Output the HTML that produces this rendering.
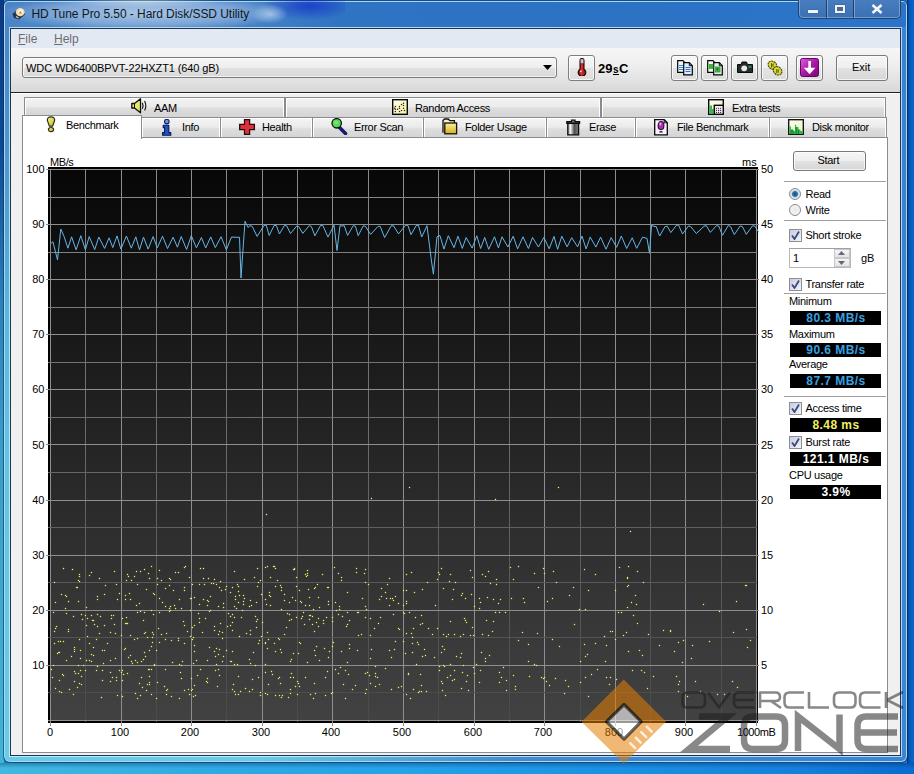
<!DOCTYPE html><html><head><meta charset="utf-8"><style>
*{margin:0;padding:0;box-sizing:border-box}
html,body{width:914px;height:774px;overflow:hidden;background:#1a7fc8}
body{position:relative;font-family:"Liberation Sans",sans-serif;font-size:11px;color:#000}
.a{position:absolute}
.t{position:absolute;white-space:nowrap;line-height:1}
.tab{position:absolute;background:linear-gradient(#f4f4f4,#ebebeb 45%,#dddddd 55%,#d4d4d4);border:1px solid #8a8b8e;border-bottom:none;box-shadow:inset 1px 1px 0 #fff,inset -1px 0 0 #fff}
.btn{position:absolute;border:1px solid #7a7a7a;border-radius:3px;background:linear-gradient(#f6f6f6,#eeeeee 50%,#e2e2e2 51%,#d6d6d6);box-shadow:inset 0 0 0 1px rgba(255,255,255,.7)}
.tb{position:absolute;border:1px solid #7e7e7e;border-radius:3px;background:linear-gradient(#f8f8f8,#eeeeee 50%,#e4e4e4 51%,#dcdcdc);box-shadow:inset 0 0 0 1px rgba(255,255,255,.75)}
.sep{position:absolute;height:1px;background:#a0a0a0;border-bottom:1px solid #fff}
.box{position:absolute;background:#000;color:#fff;font-weight:bold;font-size:12px;text-align:center;line-height:14px;letter-spacing:0.45px;padding-left:1px}
.lbl{position:absolute;white-space:nowrap;font-size:11px;line-height:1}
.yl{position:absolute;font-size:11px;line-height:1;text-align:right;width:30px}
.cb{position:absolute;width:13px;height:13px;border:1px solid #8f8f8f;background:linear-gradient(135deg,#c8cce0,#f4f4fa)}
</style></head><body>
<div class="a" style="left:0;top:0;width:914px;height:774px;background:#1a78c8"></div>
<div class="a" style="left:0;top:0;width:4px;height:774px;background:linear-gradient(#0a3a84 0,#0e4a94 150px,#2a80b8 300px,#3a9cc8 450px,#40b4d8 774px)"></div>
<div class="a" style="left:907px;top:0;width:7px;height:774px;background:linear-gradient(90deg,#002e80,#0456b0 2px,#0868d2 7px)"></div>
<div class="a" style="left:0;top:763px;width:914px;height:11px;background:linear-gradient(90deg,#40b8e0,#30aae4 200px,#24a2ea 400px,#1a92e4 600px,#1480dc 800px,#0a6ad0 914px)"></div>
<div class="a" style="left:0;top:763px;width:914px;height:11px;background:linear-gradient(rgba(0,40,90,.35),rgba(255,255,255,0) 5px)"></div>
<div class="a" style="left:3px;top:0px;width:905px;height:763px;border-radius:6px 6px 7px 7px;background:rgba(16,40,80,.55)"></div>
<div class="a" style="left:4px;top:1px;width:903px;height:761px;border-radius:5px 5px 6px 6px;background:#a8d8f4"></div>
<div class="a" style="left:5px;top:2px;width:901px;height:759px;border-radius:4px 4px 5px 5px;background:linear-gradient(180deg,#4a82c6 0,#4a8ac8 60px,#4e9cd0 180px,#58b8e0 320px,#60c4e4 450px,#68cce8 759px)"></div>
<div class="a" style="left:5px;top:2px;width:901px;height:759px;border-radius:4px 4px 5px 5px;background:linear-gradient(90deg,rgba(58,118,192,0) 0,rgba(58,118,192,0) 250px,rgba(58,120,196,.8) 520px,rgba(56,130,212,.96) 800px)"></div>
<div class="a" style="left:5px;top:2px;width:901px;height:25px;border-radius:4px 4px 0 0;background:linear-gradient(90deg,rgba(40,110,195,0) 0,rgba(40,110,195,0) 230px,rgba(40,112,195,.75) 330px,rgba(40,112,195,.8) 900px)"></div>
<div class="a" style="left:5px;top:1px;width:280px;height:26px;background:radial-gradient(ellipse 52% 70% at 50% 45%,rgba(210,226,244,.7),rgba(185,208,236,.45) 65%,rgba(150,190,230,0) 100%)"></div>
<div class="a" style="left:255px;top:0px;width:90px;height:24px;background:radial-gradient(ellipse 50% 60% at 60% 25%,rgba(10,30,200,.6),rgba(30,60,200,0) 100%)"></div>
<div class="a" style="left:252px;top:4px;width:36px;height:20px;background:radial-gradient(ellipse 50% 50% at 50% 50%,rgba(220,235,250,.55),rgba(200,220,240,0) 100%)"></div>
<div class="a" style="left:60px;top:0px;width:160px;height:10px;background:radial-gradient(ellipse 50% 60% at 50% 20%,rgba(230,240,230,.45),rgba(200,220,230,0) 100%)"></div>
<div class="t" style="left:31.5px;top:8px;font-size:12px;color:#101820;letter-spacing:-0.06px">HD Tune Pro 5.50 - Hard Disk/SSD Utility</div>
<svg style="position:absolute;left:11px;top:6px" width="16" height="14" viewBox="0 0 16 14" ><path d="M1.5 8L7 2.5L12 4L14 8.5L8 13.5L3 12Z" fill="#1a2440" opacity=".85"/><ellipse cx="9.2" cy="6.2" rx="4.4" ry="4.1" fill="#f0dcb0"/><ellipse cx="9.6" cy="5.6" rx="2.6" ry="2.2" fill="#fff4dc"/><circle cx="9.4" cy="6.6" r="1.1" fill="#b07840"/><path d="M5 10.5L7.5 12" stroke="#e8d0a0" stroke-width="1.2"/></svg>
<div class="a" style="left:798px;top:-4px;width:103px;height:23px;border-radius:0 0 5px 5px;border:1px solid rgba(30,50,90,.8);box-shadow:inset 0 0 0 1px rgba(180,210,240,.45);background:linear-gradient(#4a80c0,#3a70b4)"></div>
<div class="a" style="left:826px;top:0;width:1px;height:18px;background:rgba(30,50,90,.8)"></div>
<div class="a" style="left:827px;top:0;width:1px;height:18px;background:rgba(180,210,240,.45)"></div>
<div class="a" style="left:853px;top:0;width:1px;height:18px;background:rgba(30,50,90,.8)"></div>
<div class="a" style="left:854px;top:0;width:1px;height:18px;background:rgba(180,210,240,.45)"></div>
<div class="a" style="left:808px;top:10px;width:10px;height:3px;background:#f0f4f8;box-shadow:0 0 1px #203050"></div>
<div class="a" style="left:835px;top:5px;width:10px;height:8px;border:2px solid #f0f4f8;border-top-width:2px;background:#4a6a90;box-shadow:0 0 1px #203050"></div>
<svg style="position:absolute;left:871px;top:4px" width="12" height="10" viewBox="0 0 12 10" ><path d="M1.5 1 L10.5 9 M10.5 1 L1.5 9" stroke="#f4f6f8" stroke-width="2.6"/></svg>
<div class="a" style="left:9px;top:27px;width:893px;height:730px;border:1px solid rgba(220,245,255,.75)"></div>
<div class="a" style="left:10px;top:28px;width:891px;height:728px;border:1px solid #1e3550;background:#f0f0f0"></div>
<div class="a" style="left:11px;top:29px;width:889px;height:19px;background:#e3e9f2"></div>
<div class="t" style="left:18px;top:33px;font-size:12px;color:#6d6d6d"><u>F</u>ile</div>
<div class="t" style="left:54px;top:33px;font-size:12px;color:#6d6d6d"><u>H</u>elp</div>
<div class="a" style="left:11px;top:48px;width:889px;height:44px;background:linear-gradient(#f6f6f6,#eeeeee 40%,#e0e0e0 80%,#d8d8d8)"></div>
<div class="a" style="left:11px;top:92px;width:889px;height:1px;background:#202020"></div>
<div class="a" style="left:11px;top:93px;width:889px;height:1px;background:#ffffff"></div>
<div class="a" style="left:22px;top:57px;width:535px;height:21px;border:1px solid #7a7a7a;border-radius:3px;background:linear-gradient(#f6f6f6,#eeeeee 50%,#e2e2e2 51%,#d8d8d8);box-shadow:inset 0 0 0 1px rgba(255,255,255,.7)"></div>
<div class="t" style="left:26px;top:63px;font-size:11px;letter-spacing:-0.1px">WDC WD6400BPVT-22HXZT1 (640 gB)</div>
<svg style="position:absolute;left:543px;top:65px" width="9" height="5" viewBox="0 0 9 5" ><path d="M0 0H9L4.5 5Z" fill="#000"/></svg>
<div class="tb" style="left:568px;top:55px;width:27px;height:26px"></div>
<svg style="position:absolute;left:577px;top:58px" width="10" height="18" viewBox="0 0 10 18" ><defs><linearGradient id="th" x1="0" y1="0" x2="1" y2="0"><stop offset="0" stop-color="#801010"/><stop offset=".45" stop-color="#e83030"/><stop offset="1" stop-color="#701010"/></linearGradient></defs><path d="M3 2.5A2 2 0 0 1 7 2.5V11.2A3.8 3.8 0 1 1 3 11.2Z" fill="url(#th)" stroke="#1a0a0a" stroke-width="1.1"/><rect x="3.6" y="1.2" width="2.8" height="4.5" fill="#c8c8c8"/><path d="M3.1 5.7H6.9" stroke="#401010" stroke-width=".6"/><circle cx="3.9" cy="13.3" r="1" fill="#f8c0c0"/></svg>
<div class="t" style="left:598px;top:62px;font-size:13px;font-weight:bold">29<span style="display:inline-block;font-size:10px;border-bottom:1.5px solid #000;line-height:9px;margin:0 0.5px">s</span>C</div>
<div class="tb" style="left:671px;top:55px;width:27px;height:26px"></div>
<div class="tb" style="left:701px;top:55px;width:27px;height:26px"></div>
<div class="tb" style="left:731px;top:55px;width:27px;height:26px"></div>
<div class="tb" style="left:761px;top:55px;width:27px;height:26px"></div>
<div class="tb" style="left:796px;top:55px;width:27px;height:26px"></div>
<div class="btn" style="left:836px;top:55px;width:52px;height:26px"></div>
<div class="t" style="left:852px;top:62px;font-size:11px">Exit</div>
<svg style="position:absolute;left:677px;top:60px" width="17" height="16" viewBox="0 0 17 16" ><path d="M0.7 0.7H6L8 2.7V12.3H0.7Z" fill="#f0f8ff" stroke="#050505" stroke-width="1.2"/><path d="M6.7 2.7H12.3L15.3 5.7V14.8H6.7Z" fill="#e0ecfa" stroke="#050505" stroke-width="1.2"/><path d="M12.3 2.7V5.7H15.3" fill="none" stroke="#050505" stroke-width="1"/><path d="M2 5.5H6M2 7.5H6M2 9.5H6" stroke="#3a88d0"/><path d="M8.5 7.5H13.5M8.5 9.5H13.5M8.5 11.5H13.5" stroke="#3a70c8"/></svg>
<svg style="position:absolute;left:707px;top:60px" width="17" height="16" viewBox="0 0 17 16" ><path d="M0.7 0.7H6L8 2.7V12.3H0.7Z" fill="#f0fcf0" stroke="#050505" stroke-width="1.2"/><path d="M6.7 2.7H12.3L15.3 5.7V14.8H6.7Z" fill="#e4f4e4" stroke="#050505" stroke-width="1.2"/><path d="M12.3 2.7V5.7H15.3" fill="none" stroke="#050505" stroke-width="1"/><rect x="1.8" y="4" width="4.5" height="5" fill="#40b040"/><rect x="8" y="6.5" width="5.5" height="6" fill="#40a848"/><circle cx="10.5" cy="9" r="1" fill="#207020"/></svg>
<svg style="position:absolute;left:737px;top:61px" width="16" height="12" viewBox="0 0 16 12" ><path d="M0.5 3.5H4L5 1H9.5L10.5 3.5H15.5V11.5H0.5Z" fill="#282c28" stroke="#0a0a0a"/><circle cx="7.2" cy="7.3" r="2.9" fill="#e8e8e8"/><rect x="11.5" y="4.8" width="3" height="2.2" fill="#208850"/></svg>
<svg style="position:absolute;left:767px;top:60px" width="16" height="16" viewBox="0 0 16 16" ><g stroke="#404008" stroke-width="1.1" stroke-dasharray="2 .6"><ellipse cx="5.4" cy="5.2" rx="4.6" ry="3.8" transform="rotate(40 5.4 5.2)" fill="#dcdc38"/><ellipse cx="10.6" cy="10.8" rx="4.6" ry="3.8" transform="rotate(40 10.6 10.8)" fill="#dcdc38"/></g><path d="M4.6 3.2V7.6M6.6 3.5Q5 5 6.4 6.8M9.8 9V13.2M11.8 9.3Q10.4 10.8 11.6 12.6" stroke="#505008" stroke-width="1" fill="none"/></svg>
<svg style="position:absolute;left:800px;top:58px" width="19" height="19" viewBox="0 0 19 19" ><defs><linearGradient id="pu" x1="0" y1="0" x2="1" y2="1"><stop offset="0" stop-color="#e060e0"/><stop offset=".5" stop-color="#a818a8"/><stop offset="1" stop-color="#780878"/></linearGradient></defs><rect x="0.5" y="0.5" width="18" height="18" rx="2" fill="url(#pu)" stroke="#600860"/><rect x="8.3" y="3" width="2.6" height="7.5" fill="#fff"/><path d="M3.8 9.8H15.4L9.6 16.2Z" fill="#fff"/></svg>
<div class="tab" style="left:24px;top:97px;width:261px;height:20px"></div>
<div class="tab" style="left:285px;top:97px;width:316px;height:20px"></div>
<div class="tab" style="left:601px;top:97px;width:285px;height:20px"></div>
<div class="tab" style="left:141px;top:117px;width:80px;height:21px"></div>
<div class="tab" style="left:220px;top:117px;width:93px;height:21px"></div>
<div class="tab" style="left:312px;top:117px;width:112px;height:21px"></div>
<div class="tab" style="left:423px;top:117px;width:124px;height:21px"></div>
<div class="tab" style="left:546px;top:117px;width:90px;height:21px"></div>
<div class="tab" style="left:635px;top:117px;width:135px;height:21px"></div>
<div class="tab" style="left:769px;top:117px;width:118px;height:21px"></div>
<div class="a" style="left:22px;top:137px;width:866px;height:616px;border:1px solid #898c95;background:#fff"></div>
<div class="a" style="left:22px;top:115px;width:120px;height:24px;border:1px solid #898c95;border-bottom:none;background:#fff"></div>
<div class="t" style="left:66px;top:120px;font-size:11px;letter-spacing:-0.35px">Benchmark</div>
<div class="t" style="left:154px;top:103px;font-size:11px;letter-spacing:-0.35px">AAM</div>
<div class="t" style="left:182px;top:122px;font-size:11px;letter-spacing:-0.35px">Info</div>
<div class="t" style="left:262px;top:122px;font-size:11px;letter-spacing:-0.35px">Health</div>
<div class="t" style="left:354px;top:122px;font-size:11px;letter-spacing:-0.35px">Error Scan</div>
<div class="t" style="left:465px;top:122px;font-size:11px;letter-spacing:-0.35px">Folder Usage</div>
<div class="t" style="left:589px;top:122px;font-size:11px;letter-spacing:-0.35px">Erase</div>
<div class="t" style="left:677px;top:122px;font-size:11px;letter-spacing:-0.35px">File Benchmark</div>
<div class="t" style="left:812px;top:122px;font-size:11px;letter-spacing:-0.35px">Disk monitor</div>
<div class="t" style="left:415px;top:103px;font-size:11px;letter-spacing:-0.35px">Random Access</div>
<div class="t" style="left:732px;top:103px;font-size:11px;letter-spacing:-0.35px">Extra tests</div>
<svg style="position:absolute;left:46px;top:116px" width="10" height="17" viewBox="0 0 10 17" ><defs><linearGradient id="yx" x1="0" y1="0" x2="1" y2="1"><stop offset="0" stop-color="#f8f8a0"/><stop offset="1" stop-color="#b8b820"/></linearGradient></defs><path d="M5 0.8C7.6 0.8 9 2.2 8.6 4.6L6.6 10.2H3.4L1.4 4.6C1 2.2 2.4 0.8 5 0.8Z" fill="url(#yx)" stroke="#303010" stroke-width="1.2"/><ellipse cx="5" cy="13.6" rx="2.6" ry="2.1" fill="url(#yx)" stroke="#303010" stroke-width="1.2"/></svg>
<svg style="position:absolute;left:131px;top:98px" width="17" height="16" viewBox="0 0 17 16" ><path d="M0.8 5.5H3.5L9.5 0.8V14.8L3.5 10H0.8Z" fill="#e8e870" stroke="#101008" stroke-width="1.3" stroke-linejoin="round"/><path d="M3.5 5.5V10" stroke="#101008"/><path d="M11.3 4.8Q12.8 7.8 11.3 10.8M13.6 3Q16 7.8 13.6 12.6" stroke="#181818" fill="none" stroke-width="1.2"/></svg>
<svg style="position:absolute;left:162px;top:119px" width="10" height="17" viewBox="0 0 10 17" ><circle cx="4.8" cy="2.6" r="2.3" fill="#60a0e0" stroke="#102060" stroke-width="1.1"/><path d="M1.2 6.2H6.8V13.6H8.8V16.3H0.6V13.6H2.6V8.6H1.2Z" fill="#2050c8" stroke="#0a1850" stroke-width="1.1" stroke-linejoin="round"/></svg>
<svg style="position:absolute;left:239px;top:119px" width="17" height="17" viewBox="0 0 17 17" ><path d="M5.5 0.7H10.6V5.4H15.4V10.6H10.6V15.4H5.5V10.6H0.7V5.4H5.5Z" fill="#e03040" stroke="#2a0808" stroke-width="1.3"/></svg>
<svg style="position:absolute;left:331px;top:118px" width="17" height="17" viewBox="0 0 17 17" ><path d="M8.5 9.5L14.5 15.5" stroke="#1a1a70" stroke-width="3.6" stroke-linecap="round"/><circle cx="5.7" cy="5.3" r="4.7" fill="#58d858" stroke="#081808" stroke-width="1.3"/><circle cx="5" cy="4.6" r="2" fill="#90f090" opacity=".6"/></svg>
<svg style="position:absolute;left:442px;top:118px" width="16" height="17" viewBox="0 0 16 17" ><defs><linearGradient id="fg" x1="0" y1="0" x2="0" y2="1"><stop offset="0" stop-color="#f8f0a0"/><stop offset="1" stop-color="#d8b018"/></linearGradient></defs><path d="M1 14.8V2.6L2.6 1H6.4L7.8 2.6H12.4V5" fill="#f8f0c8" stroke="#101008" stroke-width="1.3"/><rect x="2.8" y="5" width="11.8" height="10.8" fill="url(#fg)" stroke="#101008" stroke-width="1.3"/></svg>
<svg style="position:absolute;left:566px;top:119px" width="15" height="17" viewBox="0 0 15 17" ><defs><linearGradient id="tg" x1="0" y1="0" x2="1" y2="0"><stop offset="0" stop-color="#909090"/><stop offset=".25" stop-color="#f0f0f0"/><stop offset=".6" stop-color="#505050"/><stop offset="1" stop-color="#808080"/></linearGradient></defs><path d="M0.8 2.6H5.5V1H9V2.6H13.6V4.4H0.8Z" fill="#707070" stroke="#0a0a0a" stroke-width="1.2"/><path d="M1.8 4.4H12.6V15.8H1.8Z" fill="url(#tg)" stroke="#0a0a0a" stroke-width="1.3"/></svg>
<svg style="position:absolute;left:654px;top:119px" width="14" height="17" viewBox="0 0 14 17" ><path d="M0.7 0.7H10.2L13.3 3.8V15.8H0.7Z" fill="#f8f4fc" stroke="#0a0a0a" stroke-width="1.3"/><path d="M10.2 0.7V3.8H13.3" fill="none" stroke="#0a0a0a" stroke-width="1"/><ellipse cx="7" cy="6.6" rx="2.9" ry="4.1" fill="#b030b8" stroke="#300838" stroke-width="1.1"/><ellipse cx="6.3" cy="5" rx="1" ry="1.4" fill="#f0a0f8"/><path d="M5.5 13.3Q7 11.8 8.5 13.3" stroke="#201020" stroke-width="1.2" fill="none"/></svg>
<svg style="position:absolute;left:788px;top:119px" width="16" height="16" viewBox="0 0 16 16" ><defs><linearGradient id="dm" x1="0" y1="0" x2="1" y2="1"><stop offset="0" stop-color="#fffff0"/><stop offset="1" stop-color="#e8f4c0"/></linearGradient></defs><rect x="0.7" y="0.7" width="14.6" height="14.6" fill="url(#dm)" stroke="#0a0a0a" stroke-width="1.3"/><path d="M1.4 15V7.4H3V11H5V12H7V5.8H8.2V8H10.4V10.6H12.4V12H14.6V15Z" fill="#30b848"/><path d="M3 15V11H5V15M8.2 15V8M10.4 15V10.6" stroke="#108030" stroke-width="1" fill="none"/></svg>
<svg style="position:absolute;left:392px;top:99px" width="16" height="16" viewBox="0 0 16 16" ><defs><linearGradient id="ra" x1="0" y1="0" x2="1" y2="1"><stop offset="0" stop-color="#fffff0"/><stop offset="1" stop-color="#f8f0a0"/></linearGradient></defs><rect x="0.7" y="0.7" width="14.6" height="14.6" fill="url(#ra)" stroke="#080808" stroke-width="1.4"/><circle cx="3.4" cy="7.4" r="0.75" fill="#302810"/><circle cx="2.5" cy="9.3" r="0.75" fill="#302810"/><circle cx="3.4" cy="10.3" r="0.75" fill="#302810"/><circle cx="5.5" cy="10.3" r="0.75" fill="#302810"/><circle cx="3.4" cy="12.4" r="0.75" fill="#302810"/><circle cx="7.5" cy="7.4" r="0.75" fill="#302810"/><circle cx="7.5" cy="9.3" r="0.75" fill="#302810"/><circle cx="7.5" cy="12.4" r="0.75" fill="#302810"/><circle cx="9.5" cy="5.4" r="0.75" fill="#302810"/><circle cx="9.5" cy="11.4" r="0.75" fill="#302810"/><circle cx="11.5" cy="4.3" r="0.75" fill="#302810"/><circle cx="11.5" cy="6.4" r="0.75" fill="#302810"/><circle cx="11.5" cy="9.3" r="0.75" fill="#302810"/><circle cx="12.5" cy="11.4" r="0.75" fill="#302810"/></svg>
<svg style="position:absolute;left:708px;top:99px" width="16" height="16" viewBox="0 0 16 16" ><defs><linearGradient id="et" x1="0" y1="0" x2="1" y2="1"><stop offset="0" stop-color="#fffff8"/><stop offset="1" stop-color="#e8f0b0"/></linearGradient></defs><rect x="0.7" y="0.7" width="14.6" height="14.6" fill="url(#et)" stroke="#080808" stroke-width="1.4"/><path d="M1.4 15V6.5H4V10H5.6V15Z" fill="#40b850"/><rect x="6.3" y="6.3" width="9" height="9" fill="#f4e8f4" stroke="#080808" stroke-width="1.4"/><circle cx="8.5" cy="9.3" r="0.6" fill="#403040"/><circle cx="8.5" cy="11.4" r="0.6" fill="#403040"/><circle cx="8.5" cy="13.4" r="0.6" fill="#403040"/><circle cx="10.6" cy="9.3" r="0.6" fill="#403040"/><circle cx="10.6" cy="11.4" r="0.6" fill="#403040"/><circle cx="10.6" cy="13.4" r="0.6" fill="#403040"/><circle cx="12.6" cy="9.3" r="0.6" fill="#403040"/><circle cx="12.6" cy="11.4" r="0.6" fill="#403040"/><circle cx="12.6" cy="13.4" r="0.6" fill="#403040"/></svg>
<svg class="a" style="left:0;top:0" width="914" height="774" viewBox="0 0 914 774"><defs><linearGradient id="bg" x1="0" y1="0" x2="0" y2="1"><stop offset="0" stop-color="#070707"/><stop offset="1" stop-color="#424242"/></linearGradient></defs><rect x="50" y="169" width="707" height="552" fill="url(#bg)"/><rect x="48" y="167" width="710" height="2" fill="#000"/><rect x="48" y="167" width="2" height="556" fill="#000"/><rect x="48" y="720" width="710" height="3" fill="#000"/><rect x="757" y="167" width="1" height="556" fill="#000"/><defs><linearGradient id="mg" x1="0" y1="169" x2="0" y2="722" gradientUnits="userSpaceOnUse"><stop offset="0" stop-color="#8a8a8a"/><stop offset="1" stop-color="#4a4a4a"/></linearGradient></defs><line x1="50.5" y1="169" x2="50.5" y2="726" stroke="#8e8e8e" stroke-width="1"/><rect x="85.0" y="169" width="1" height="553" fill="url(#mg)"/><line x1="121.5" y1="169" x2="121.5" y2="726" stroke="#8e8e8e" stroke-width="1"/><rect x="156.0" y="169" width="1" height="553" fill="url(#mg)"/><line x1="191.5" y1="169" x2="191.5" y2="726" stroke="#8e8e8e" stroke-width="1"/><rect x="226.0" y="169" width="1" height="553" fill="url(#mg)"/><line x1="262.5" y1="169" x2="262.5" y2="726" stroke="#8e8e8e" stroke-width="1"/><rect x="297.0" y="169" width="1" height="553" fill="url(#mg)"/><line x1="332.5" y1="169" x2="332.5" y2="726" stroke="#8e8e8e" stroke-width="1"/><rect x="368.0" y="169" width="1" height="553" fill="url(#mg)"/><line x1="403.5" y1="169" x2="403.5" y2="726" stroke="#8e8e8e" stroke-width="1"/><rect x="438.0" y="169" width="1" height="553" fill="url(#mg)"/><line x1="474.5" y1="169" x2="474.5" y2="726" stroke="#8e8e8e" stroke-width="1"/><rect x="509.0" y="169" width="1" height="553" fill="url(#mg)"/><line x1="544.5" y1="169" x2="544.5" y2="726" stroke="#8e8e8e" stroke-width="1"/><rect x="580.0" y="169" width="1" height="553" fill="url(#mg)"/><line x1="615.5" y1="169" x2="615.5" y2="726" stroke="#8e8e8e" stroke-width="1"/><rect x="650.0" y="169" width="1" height="553" fill="url(#mg)"/><line x1="685.5" y1="169" x2="685.5" y2="726" stroke="#8e8e8e" stroke-width="1"/><rect x="721.0" y="169" width="1" height="553" fill="url(#mg)"/><line x1="756.5" y1="169" x2="756.5" y2="726" stroke="#8e8e8e" stroke-width="1"/><line x1="46" y1="169.5" x2="759" y2="169.5" stroke="#8e8e8e" stroke-width="1"/><line x1="48" y1="197.5" x2="757" y2="197.5" stroke="#868686" stroke-width="1"/><line x1="46" y1="224.5" x2="759" y2="224.5" stroke="#8e8e8e" stroke-width="1"/><line x1="48" y1="252.5" x2="757" y2="252.5" stroke="#808080" stroke-width="1"/><line x1="46" y1="279.5" x2="759" y2="279.5" stroke="#8e8e8e" stroke-width="1"/><line x1="48" y1="307.5" x2="757" y2="307.5" stroke="#797979" stroke-width="1"/><line x1="46" y1="334.5" x2="759" y2="334.5" stroke="#8e8e8e" stroke-width="1"/><line x1="48" y1="362.5" x2="757" y2="362.5" stroke="#737373" stroke-width="1"/><line x1="46" y1="389.5" x2="759" y2="389.5" stroke="#8e8e8e" stroke-width="1"/><line x1="48" y1="417.5" x2="757" y2="417.5" stroke="#6d6d6d" stroke-width="1"/><line x1="46" y1="444.5" x2="759" y2="444.5" stroke="#8e8e8e" stroke-width="1"/><line x1="48" y1="472.5" x2="757" y2="472.5" stroke="#666666" stroke-width="1"/><line x1="46" y1="500.5" x2="759" y2="500.5" stroke="#8e8e8e" stroke-width="1"/><line x1="48" y1="527.5" x2="757" y2="527.5" stroke="#606060" stroke-width="1"/><line x1="46" y1="555.5" x2="759" y2="555.5" stroke="#8e8e8e" stroke-width="1"/><line x1="48" y1="582.5" x2="757" y2="582.5" stroke="#595959" stroke-width="1"/><line x1="46" y1="610.5" x2="759" y2="610.5" stroke="#8e8e8e" stroke-width="1"/><line x1="48" y1="637.5" x2="757" y2="637.5" stroke="#535353" stroke-width="1"/><line x1="46" y1="665.5" x2="759" y2="665.5" stroke="#8e8e8e" stroke-width="1"/><line x1="48" y1="692.5" x2="757" y2="692.5" stroke="#4d4d4d" stroke-width="1"/><line x1="48" y1="720.5" x2="759" y2="720.5" stroke="#8e8e8e" stroke-width="1"/><path d="M419 624h3v1h-3zM420 623h1v1h-1zM420 625h1v1h-1zM179 672h3v1h-3zM180 671h1v1h-1zM180 673h1v1h-1zM171 662h3v1h-3zM172 661h1v1h-1zM172 663h1v1h-1zM442 634h3v1h-3zM443 633h1v1h-1zM443 635h1v1h-1zM124 599h3v1h-3zM125 598h1v1h-1zM125 600h1v1h-1zM245 633h3v1h-3zM246 632h1v1h-1zM246 634h1v1h-1zM481 634h3v1h-3zM482 633h1v1h-1zM482 635h1v1h-1zM425 691h3v1h-3zM426 690h1v1h-1zM426 692h1v1h-1zM642 582h3v1h-3zM643 581h1v1h-1zM643 583h1v1h-1zM361 598h3v1h-3zM362 597h1v1h-1zM362 599h1v1h-1zM101 670h3v1h-3zM102 669h1v1h-1zM102 671h1v1h-1zM150 694h3v1h-3zM151 693h1v1h-1zM151 695h1v1h-1zM204 618h3v1h-3zM205 617h1v1h-1zM205 619h1v1h-1zM636 623h3v1h-3zM637 622h1v1h-1zM637 624h1v1h-1zM413 592h3v1h-3zM414 591h1v1h-1zM414 593h1v1h-1zM274 568h3v1h-3zM275 567h1v1h-1zM275 569h1v1h-1zM440 568h3v1h-3zM441 567h1v1h-1zM441 569h1v1h-1zM283 634h3v1h-3zM284 633h1v1h-1zM284 635h1v1h-1zM95 670h3v1h-3zM96 669h1v1h-1zM96 671h1v1h-1zM735 601h3v1h-3zM736 600h1v1h-1zM736 602h1v1h-1zM77 601h3v1h-3zM78 600h1v1h-1zM78 602h1v1h-1zM141 687h3v1h-3zM142 686h1v1h-1zM142 688h1v1h-1zM627 585h3v1h-3zM628 584h1v1h-1zM628 586h1v1h-1zM543 573h3v1h-3zM544 572h1v1h-1zM544 574h1v1h-1zM101 650h3v1h-3zM102 649h1v1h-1zM102 651h1v1h-1zM615 679h3v1h-3zM616 678h1v1h-1zM616 680h1v1h-1zM96 626h3v1h-3zM97 625h1v1h-1zM97 627h1v1h-1zM289 689h3v1h-3zM290 688h1v1h-1zM290 690h1v1h-1zM238 636h3v1h-3zM239 635h1v1h-1zM239 637h1v1h-1zM218 587h3v1h-3zM219 586h1v1h-1zM219 588h1v1h-1zM85 607h3v1h-3zM86 606h1v1h-1zM86 608h1v1h-1zM265 604h3v1h-3zM266 603h1v1h-1zM266 605h1v1h-1zM402 612h3v1h-3zM403 611h1v1h-1zM403 613h1v1h-1zM62 568h3v1h-3zM63 567h1v1h-1zM63 569h1v1h-1zM183 690h3v1h-3zM184 689h1v1h-1zM184 691h1v1h-1zM124 623h3v1h-3zM125 622h1v1h-1zM125 624h1v1h-1zM327 657h3v1h-3zM328 656h1v1h-1zM328 658h1v1h-1zM498 612h3v1h-3zM499 611h1v1h-1zM499 613h1v1h-1zM88 575h3v1h-3zM89 574h1v1h-1zM89 576h1v1h-1zM572 587h3v1h-3zM573 586h1v1h-1zM573 588h1v1h-1zM109 681h3v1h-3zM110 680h1v1h-1zM110 682h1v1h-1zM522 598h3v1h-3zM523 597h1v1h-1zM523 599h1v1h-1zM256 586h3v1h-3zM257 585h1v1h-1zM257 587h1v1h-1zM364 693h3v1h-3zM365 692h1v1h-1zM365 694h1v1h-1zM222 607h3v1h-3zM223 606h1v1h-1zM223 608h1v1h-1zM301 616h3v1h-3zM302 615h1v1h-1zM302 617h1v1h-1zM384 592h3v1h-3zM385 591h1v1h-1zM385 593h1v1h-1zM405 601h3v1h-3zM406 600h1v1h-1zM406 602h1v1h-1zM113 571h3v1h-3zM114 570h1v1h-1zM114 572h1v1h-1zM65 596h3v1h-3zM66 595h1v1h-1zM66 597h1v1h-1zM462 665h3v1h-3zM463 664h1v1h-1zM463 666h1v1h-1zM279 585h3v1h-3zM280 584h1v1h-1zM280 586h1v1h-1zM80 684h3v1h-3zM81 683h1v1h-1zM81 685h1v1h-1zM622 635h3v1h-3zM623 634h1v1h-1zM623 636h1v1h-1zM212 583h3v1h-3zM213 582h1v1h-1zM213 584h1v1h-1zM304 677h3v1h-3zM305 676h1v1h-1zM305 678h1v1h-1zM443 649h3v1h-3zM444 648h1v1h-1zM444 650h1v1h-1zM52 665h3v1h-3zM53 664h1v1h-1zM53 666h1v1h-1zM404 653h3v1h-3zM405 652h1v1h-1zM405 654h1v1h-1zM96 599h3v1h-3zM97 598h1v1h-1zM97 600h1v1h-1zM102 663h3v1h-3zM103 662h1v1h-1zM103 664h1v1h-1zM194 695h3v1h-3zM195 694h1v1h-1zM195 696h1v1h-1zM398 629h3v1h-3zM399 628h1v1h-1zM399 630h1v1h-1zM484 576h3v1h-3zM485 575h1v1h-1zM485 577h1v1h-1zM153 664h3v1h-3zM154 663h1v1h-1zM154 665h1v1h-1zM264 567h3v1h-3zM265 566h1v1h-1zM265 568h1v1h-1zM92 655h3v1h-3zM93 654h1v1h-1zM93 656h1v1h-1zM255 627h3v1h-3zM256 626h1v1h-1zM256 628h1v1h-1zM378 684h3v1h-3zM379 683h1v1h-1zM379 685h1v1h-1zM190 690h3v1h-3zM191 689h1v1h-1zM191 691h1v1h-1zM62 675h3v1h-3zM63 674h1v1h-1zM63 676h1v1h-1zM239 691h3v1h-3zM240 690h1v1h-1zM240 692h1v1h-1zM198 584h3v1h-3zM199 583h1v1h-1zM199 585h1v1h-1zM143 633h3v1h-3zM144 632h1v1h-1zM144 634h1v1h-1zM213 630h3v1h-3zM214 629h1v1h-1zM214 631h1v1h-1zM67 631h3v1h-3zM68 630h1v1h-1zM68 632h1v1h-1zM367 584h3v1h-3zM368 583h1v1h-1zM368 585h1v1h-1zM292 677h3v1h-3zM293 676h1v1h-1zM293 678h1v1h-1zM51 677h3v1h-3zM52 676h1v1h-1zM52 678h1v1h-1zM134 660h3v1h-3zM135 659h1v1h-1zM135 661h1v1h-1zM312 698h3v1h-3zM313 697h1v1h-1zM313 699h1v1h-1zM465 622h3v1h-3zM466 621h1v1h-1zM466 623h1v1h-1zM243 579h3v1h-3zM244 578h1v1h-1zM244 580h1v1h-1zM237 591h3v1h-3zM238 590h1v1h-1zM238 592h1v1h-1zM313 683h3v1h-3zM314 682h1v1h-1zM314 684h1v1h-1zM437 572h3v1h-3zM438 571h1v1h-1zM438 573h1v1h-1zM251 689h3v1h-3zM252 688h1v1h-1zM252 690h1v1h-1zM139 611h3v1h-3zM140 610h1v1h-1zM140 612h1v1h-1zM259 695h3v1h-3zM260 694h1v1h-1zM260 696h1v1h-1zM233 606h3v1h-3zM234 605h1v1h-1zM234 607h1v1h-1zM442 588h3v1h-3zM443 587h1v1h-1zM443 589h1v1h-1zM163 686h3v1h-3zM164 685h1v1h-1zM164 687h1v1h-1zM400 686h3v1h-3zM401 685h1v1h-1zM401 687h1v1h-1zM148 578h3v1h-3zM149 577h1v1h-1zM149 579h1v1h-1zM291 597h3v1h-3zM292 596h1v1h-1zM292 598h1v1h-1zM232 684h3v1h-3zM233 683h1v1h-1zM233 685h1v1h-1zM341 616h3v1h-3zM342 615h1v1h-1zM342 617h1v1h-1zM288 602h3v1h-3zM289 601h1v1h-1zM289 603h1v1h-1zM732 632h3v1h-3zM733 631h1v1h-1zM733 633h1v1h-1zM202 599h3v1h-3zM203 598h1v1h-1zM203 600h1v1h-1zM331 692h3v1h-3zM332 691h1v1h-1zM332 693h1v1h-1zM65 660h3v1h-3zM66 659h1v1h-1zM66 661h1v1h-1zM463 618h3v1h-3zM464 617h1v1h-1zM464 619h1v1h-1zM225 586h3v1h-3zM226 585h1v1h-1zM226 587h1v1h-1zM418 691h3v1h-3zM419 690h1v1h-1zM419 692h1v1h-1zM438 670h3v1h-3zM439 669h1v1h-1zM439 671h1v1h-1zM213 651h3v1h-3zM214 650h1v1h-1zM214 652h1v1h-1zM264 599h3v1h-3zM265 598h1v1h-1zM265 600h1v1h-1zM129 635h3v1h-3zM130 634h1v1h-1zM130 636h1v1h-1zM460 595h3v1h-3zM461 594h1v1h-1zM461 596h1v1h-1zM473 606h3v1h-3zM474 605h1v1h-1zM474 607h1v1h-1zM385 598h3v1h-3zM386 597h1v1h-1zM386 599h1v1h-1zM266 632h3v1h-3zM267 631h1v1h-1zM267 633h1v1h-1zM231 689h3v1h-3zM232 688h1v1h-1zM232 690h1v1h-1zM209 610h3v1h-3zM210 609h1v1h-1zM210 611h1v1h-1zM346 592h3v1h-3zM347 591h1v1h-1zM347 593h1v1h-1zM405 694h3v1h-3zM406 693h1v1h-1zM406 695h1v1h-1zM269 596h3v1h-3zM270 595h1v1h-1zM270 597h1v1h-1zM206 605h3v1h-3zM207 604h1v1h-1zM207 606h1v1h-1zM182 621h3v1h-3zM183 620h1v1h-1zM183 622h1v1h-1zM153 594h3v1h-3zM154 593h1v1h-1zM154 595h1v1h-1zM86 618h3v1h-3zM87 617h1v1h-1zM87 619h1v1h-1zM180 665h3v1h-3zM181 664h1v1h-1zM181 666h1v1h-1zM72 616h3v1h-3zM73 615h1v1h-1zM73 617h1v1h-1zM313 588h3v1h-3zM314 587h1v1h-1zM314 589h1v1h-1zM52 612h3v1h-3zM53 611h1v1h-1zM53 613h1v1h-1zM723 694h3v1h-3zM724 693h1v1h-1zM724 695h1v1h-1zM196 675h3v1h-3zM197 674h1v1h-1zM197 676h1v1h-1zM84 615h3v1h-3zM85 614h1v1h-1zM85 616h1v1h-1zM306 570h3v1h-3zM307 569h1v1h-1zM307 571h1v1h-1zM339 667h3v1h-3zM340 666h1v1h-1zM340 668h1v1h-1zM78 574h3v1h-3zM79 573h1v1h-1zM79 575h1v1h-1zM289 693h3v1h-3zM290 692h1v1h-1zM290 694h1v1h-1zM484 661h3v1h-3zM485 660h1v1h-1zM485 662h1v1h-1zM273 566h3v1h-3zM274 565h1v1h-1zM274 567h1v1h-1zM67 629h3v1h-3zM68 628h1v1h-1zM68 630h1v1h-1zM322 623h3v1h-3zM323 622h1v1h-1zM323 624h1v1h-1zM178 664h3v1h-3zM179 663h1v1h-1zM179 665h1v1h-1zM478 608h3v1h-3zM479 607h1v1h-1zM479 609h1v1h-1zM305 576h3v1h-3zM306 575h1v1h-1zM306 577h1v1h-1zM189 598h3v1h-3zM190 597h1v1h-1zM190 599h1v1h-1zM95 639h3v1h-3zM96 638h1v1h-1zM96 640h1v1h-1zM279 683h3v1h-3zM280 682h1v1h-1zM280 684h1v1h-1zM109 632h3v1h-3zM110 631h1v1h-1zM110 633h1v1h-1zM215 648h3v1h-3zM216 647h1v1h-1zM216 649h1v1h-1zM135 605h3v1h-3zM136 604h1v1h-1zM136 606h1v1h-1zM449 664h3v1h-3zM450 663h1v1h-1zM450 665h1v1h-1zM190 598h3v1h-3zM191 597h1v1h-1zM191 599h1v1h-1zM158 642h3v1h-3zM159 641h1v1h-1zM159 643h1v1h-1zM280 697h3v1h-3zM281 696h1v1h-1zM281 698h1v1h-1zM407 673h3v1h-3zM408 672h1v1h-1zM408 674h1v1h-1zM122 674h3v1h-3zM123 673h1v1h-1zM123 675h1v1h-1zM78 581h3v1h-3zM79 580h1v1h-1zM79 582h1v1h-1zM183 643h3v1h-3zM184 642h1v1h-1zM184 644h1v1h-1zM233 691h3v1h-3zM234 690h1v1h-1zM234 692h1v1h-1zM124 648h3v1h-3zM125 647h1v1h-1zM125 649h1v1h-1zM203 584h3v1h-3zM204 583h1v1h-1zM204 585h1v1h-1zM193 645h3v1h-3zM194 644h1v1h-1zM194 646h1v1h-1zM509 567h3v1h-3zM510 566h1v1h-1zM510 568h1v1h-1zM280 590h3v1h-3zM281 589h1v1h-1zM281 591h1v1h-1zM270 671h3v1h-3zM271 670h1v1h-1zM271 672h1v1h-1zM436 579h3v1h-3zM437 578h1v1h-1zM437 580h1v1h-1zM328 651h3v1h-3zM329 650h1v1h-1zM329 652h1v1h-1zM114 658h3v1h-3zM115 657h1v1h-1zM115 659h1v1h-1zM338 606h3v1h-3zM339 605h1v1h-1zM339 607h1v1h-1zM449 621h3v1h-3zM450 620h1v1h-1zM450 622h1v1h-1zM306 662h3v1h-3zM307 661h1v1h-1zM307 663h1v1h-1zM193 685h3v1h-3zM194 684h1v1h-1zM194 686h1v1h-1zM348 620h3v1h-3zM349 619h1v1h-1zM349 621h1v1h-1zM164 639h3v1h-3zM165 638h1v1h-1zM165 640h1v1h-1zM112 615h3v1h-3zM113 614h1v1h-1zM113 616h1v1h-1zM405 603h3v1h-3zM406 602h1v1h-1zM406 604h1v1h-1zM126 673h3v1h-3zM127 672h1v1h-1zM127 674h1v1h-1zM139 695h3v1h-3zM140 694h1v1h-1zM140 696h1v1h-1zM390 689h3v1h-3zM391 688h1v1h-1zM391 690h1v1h-1zM323 648h3v1h-3zM324 647h1v1h-1zM324 649h1v1h-1zM631 670h3v1h-3zM632 669h1v1h-1zM632 671h1v1h-1zM206 678h3v1h-3zM207 677h1v1h-1zM207 679h1v1h-1zM634 595h3v1h-3zM635 594h1v1h-1zM635 596h1v1h-1zM331 617h3v1h-3zM332 616h1v1h-1zM332 618h1v1h-1zM136 662h3v1h-3zM137 661h1v1h-1zM137 663h1v1h-1zM682 640h3v1h-3zM683 639h1v1h-1zM683 641h1v1h-1zM584 677h3v1h-3zM585 676h1v1h-1zM585 678h1v1h-1zM133 639h3v1h-3zM134 638h1v1h-1zM134 640h1v1h-1zM492 621h3v1h-3zM493 620h1v1h-1zM493 622h1v1h-1zM460 653h3v1h-3zM461 652h1v1h-1zM461 654h1v1h-1zM364 569h3v1h-3zM365 568h1v1h-1zM365 570h1v1h-1zM486 597h3v1h-3zM487 596h1v1h-1zM487 598h1v1h-1zM373 628h3v1h-3zM374 627h1v1h-1zM374 629h1v1h-1zM125 623h3v1h-3zM126 622h1v1h-1zM126 624h1v1h-1zM114 633h3v1h-3zM115 632h1v1h-1zM115 634h1v1h-1zM78 576h3v1h-3zM79 575h1v1h-1zM79 577h1v1h-1zM410 633h3v1h-3zM411 632h1v1h-1zM411 634h1v1h-1zM316 584h3v1h-3zM317 583h1v1h-1zM317 585h1v1h-1zM186 631h3v1h-3zM187 630h1v1h-1zM187 632h1v1h-1zM166 689h3v1h-3zM167 688h1v1h-1zM167 690h1v1h-1zM96 666h3v1h-3zM97 665h1v1h-1zM97 667h1v1h-1zM161 602h3v1h-3zM162 601h1v1h-1zM162 603h1v1h-1zM625 632h3v1h-3zM626 631h1v1h-1zM626 633h1v1h-1zM235 608h3v1h-3zM236 607h1v1h-1zM236 609h1v1h-1zM75 587h3v1h-3zM76 586h1v1h-1zM76 588h1v1h-1zM603 636h3v1h-3zM604 635h1v1h-1zM604 637h1v1h-1zM498 682h3v1h-3zM499 681h1v1h-1zM499 683h1v1h-1zM441 683h3v1h-3zM442 682h1v1h-1zM442 684h1v1h-1zM123 649h3v1h-3zM124 648h1v1h-1zM124 650h1v1h-1zM327 601h3v1h-3zM328 600h1v1h-1zM328 602h1v1h-1zM303 624h3v1h-3zM304 623h1v1h-1zM304 625h1v1h-1zM174 572h3v1h-3zM175 571h1v1h-1zM175 573h1v1h-1zM627 651h3v1h-3zM628 650h1v1h-1zM628 652h1v1h-1zM517 566h3v1h-3zM518 565h1v1h-1zM518 567h1v1h-1zM73 647h3v1h-3zM74 646h1v1h-1zM74 648h1v1h-1zM354 685h3v1h-3zM355 684h1v1h-1zM355 686h1v1h-1zM143 652h3v1h-3zM144 651h1v1h-1zM144 653h1v1h-1zM65 613h3v1h-3zM66 612h1v1h-1zM66 614h1v1h-1zM124 595h3v1h-3zM125 594h1v1h-1zM125 596h1v1h-1zM461 593h3v1h-3zM462 592h1v1h-1zM462 594h1v1h-1zM489 583h3v1h-3zM490 582h1v1h-1zM490 584h1v1h-1zM155 650h3v1h-3zM156 649h1v1h-1zM156 651h1v1h-1zM333 567h3v1h-3zM334 566h1v1h-1zM334 568h1v1h-1zM504 612h3v1h-3zM505 611h1v1h-1zM505 613h1v1h-1zM505 690h3v1h-3zM506 689h1v1h-1zM506 691h1v1h-1zM567 686h3v1h-3zM568 685h1v1h-1zM568 687h1v1h-1zM81 619h3v1h-3zM82 618h1v1h-1zM82 620h1v1h-1zM217 669h3v1h-3zM218 668h1v1h-1zM218 670h1v1h-1zM58 691h3v1h-3zM59 690h1v1h-1zM59 692h1v1h-1zM150 646h3v1h-3zM151 645h1v1h-1zM151 647h1v1h-1zM407 674h3v1h-3zM408 673h1v1h-1zM408 675h1v1h-1zM173 605h3v1h-3zM174 604h1v1h-1zM174 606h1v1h-1zM84 670h3v1h-3zM85 669h1v1h-1zM85 671h1v1h-1zM554 678h3v1h-3zM555 677h1v1h-1zM555 679h1v1h-1zM209 596h3v1h-3zM210 595h1v1h-1zM210 597h1v1h-1zM77 665h3v1h-3zM78 664h1v1h-1zM78 666h1v1h-1zM551 639h3v1h-3zM552 638h1v1h-1zM552 640h1v1h-1zM357 635h3v1h-3zM358 634h1v1h-1zM358 636h1v1h-1zM237 694h3v1h-3zM238 693h1v1h-1zM238 695h1v1h-1zM202 568h3v1h-3zM203 567h1v1h-1zM203 569h1v1h-1zM233 664h3v1h-3zM234 663h1v1h-1zM234 665h1v1h-1zM280 609h3v1h-3zM281 608h1v1h-1zM281 610h1v1h-1zM218 649h3v1h-3zM219 648h1v1h-1zM219 650h1v1h-1zM266 648h3v1h-3zM267 647h1v1h-1zM267 649h1v1h-1zM104 585h3v1h-3zM105 584h1v1h-1zM105 586h1v1h-1zM68 689h3v1h-3zM69 688h1v1h-1zM69 690h1v1h-1zM293 569h3v1h-3zM294 568h1v1h-1zM294 570h1v1h-1zM79 650h3v1h-3zM80 649h1v1h-1zM80 651h1v1h-1zM96 614h3v1h-3zM97 613h1v1h-1zM97 615h1v1h-1zM678 681h3v1h-3zM679 680h1v1h-1zM679 682h1v1h-1zM125 580h3v1h-3zM126 579h1v1h-1zM126 581h1v1h-1zM74 673h3v1h-3zM75 672h1v1h-1zM75 674h1v1h-1zM495 579h3v1h-3zM496 578h1v1h-1zM496 580h1v1h-1zM118 593h3v1h-3zM119 592h1v1h-1zM119 594h1v1h-1zM274 568h3v1h-3zM275 567h1v1h-1zM275 569h1v1h-1zM230 661h3v1h-3zM231 660h1v1h-1zM231 662h1v1h-1zM309 694h3v1h-3zM310 693h1v1h-1zM310 695h1v1h-1zM485 620h3v1h-3zM486 619h1v1h-1zM486 621h1v1h-1zM357 612h3v1h-3zM358 611h1v1h-1zM358 613h1v1h-1zM202 578h3v1h-3zM203 577h1v1h-1zM203 579h1v1h-1zM627 566h3v1h-3zM628 565h1v1h-1zM628 567h1v1h-1zM192 696h3v1h-3zM193 695h1v1h-1zM193 697h1v1h-1zM53 631h3v1h-3zM54 630h1v1h-1zM54 632h1v1h-1zM611 631h3v1h-3zM612 630h1v1h-1zM612 632h1v1h-1zM294 600h3v1h-3zM295 599h1v1h-1zM295 601h1v1h-1zM201 632h3v1h-3zM202 631h1v1h-1zM202 633h1v1h-1zM127 576h3v1h-3zM128 575h1v1h-1zM128 577h1v1h-1zM300 618h3v1h-3zM301 617h1v1h-1zM301 619h1v1h-1zM677 684h3v1h-3zM678 683h1v1h-1zM678 685h1v1h-1zM67 601h3v1h-3zM68 600h1v1h-1zM68 602h1v1h-1zM317 597h3v1h-3zM318 596h1v1h-1zM318 598h1v1h-1zM374 666h3v1h-3zM375 665h1v1h-1zM375 667h1v1h-1zM295 586h3v1h-3zM296 585h1v1h-1zM296 587h1v1h-1zM573 624h3v1h-3zM574 623h1v1h-1zM574 625h1v1h-1zM138 683h3v1h-3zM139 682h1v1h-1zM139 684h1v1h-1zM217 606h3v1h-3zM218 605h1v1h-1zM218 607h1v1h-1zM158 598h3v1h-3zM159 597h1v1h-1zM159 599h1v1h-1zM280 587h3v1h-3zM281 586h1v1h-1zM281 588h1v1h-1zM281 695h3v1h-3zM282 694h1v1h-1zM282 696h1v1h-1zM563 693h3v1h-3zM564 692h1v1h-1zM564 694h1v1h-1zM121 696h3v1h-3zM122 695h1v1h-1zM122 697h1v1h-1zM356 650h3v1h-3zM357 649h1v1h-1zM357 651h1v1h-1zM125 617h3v1h-3zM126 616h1v1h-1zM126 618h1v1h-1zM73 671h3v1h-3zM74 670h1v1h-1zM74 672h1v1h-1zM495 584h3v1h-3zM496 583h1v1h-1zM496 585h1v1h-1zM475 664h3v1h-3zM476 663h1v1h-1zM476 665h1v1h-1zM346 662h3v1h-3zM347 661h1v1h-1zM347 663h1v1h-1zM370 649h3v1h-3zM371 648h1v1h-1zM371 650h1v1h-1zM118 670h3v1h-3zM119 669h1v1h-1zM119 671h1v1h-1zM226 626h3v1h-3zM227 625h1v1h-1zM227 627h1v1h-1zM488 655h3v1h-3zM489 654h1v1h-1zM489 656h1v1h-1zM324 695h3v1h-3zM325 694h1v1h-1zM325 696h1v1h-1zM76 587h3v1h-3zM77 586h1v1h-1zM77 588h1v1h-1zM416 642h3v1h-3zM417 641h1v1h-1zM417 643h1v1h-1zM431 634h3v1h-3zM432 633h1v1h-1zM432 635h1v1h-1zM417 692h3v1h-3zM418 691h1v1h-1zM418 693h1v1h-1zM198 618h3v1h-3zM199 617h1v1h-1zM199 619h1v1h-1zM587 696h3v1h-3zM588 695h1v1h-1zM588 697h1v1h-1zM300 602h3v1h-3zM301 601h1v1h-1zM301 603h1v1h-1zM331 621h3v1h-3zM332 620h1v1h-1zM332 622h1v1h-1zM346 612h3v1h-3zM347 611h1v1h-1zM347 613h1v1h-1zM236 664h3v1h-3zM237 663h1v1h-1zM237 665h1v1h-1zM204 618h3v1h-3zM205 617h1v1h-1zM205 619h1v1h-1zM199 669h3v1h-3zM200 668h1v1h-1zM200 670h1v1h-1zM380 596h3v1h-3zM381 595h1v1h-1zM381 597h1v1h-1zM257 582h3v1h-3zM258 581h1v1h-1zM258 583h1v1h-1zM315 622h3v1h-3zM316 621h1v1h-1zM316 623h1v1h-1zM181 661h3v1h-3zM182 660h1v1h-1zM182 662h1v1h-1zM248 606h3v1h-3zM249 605h1v1h-1zM249 607h1v1h-1zM388 650h3v1h-3zM389 649h1v1h-1zM389 651h1v1h-1zM514 689h3v1h-3zM515 688h1v1h-1zM515 690h1v1h-1zM652 676h3v1h-3zM653 675h1v1h-1zM653 677h1v1h-1zM148 650h3v1h-3zM149 649h1v1h-1zM149 651h1v1h-1zM60 692h3v1h-3zM61 691h1v1h-1zM61 693h1v1h-1zM512 579h3v1h-3zM513 578h1v1h-1zM513 580h1v1h-1zM150 669h3v1h-3zM151 668h1v1h-1zM151 670h1v1h-1zM294 686h3v1h-3zM295 685h1v1h-1zM295 687h1v1h-1zM608 684h3v1h-3zM609 683h1v1h-1zM609 685h1v1h-1zM189 636h3v1h-3zM190 635h1v1h-1zM190 637h1v1h-1zM236 584h3v1h-3zM237 583h1v1h-1zM237 585h1v1h-1zM397 628h3v1h-3zM398 627h1v1h-1zM398 629h1v1h-1zM151 632h3v1h-3zM152 631h1v1h-1zM152 633h1v1h-1zM54 628h3v1h-3zM55 627h1v1h-1zM55 629h1v1h-1zM446 677h3v1h-3zM447 676h1v1h-1zM447 678h1v1h-1zM314 693h3v1h-3zM315 692h1v1h-1zM315 694h1v1h-1zM103 650h3v1h-3zM104 649h1v1h-1zM104 651h1v1h-1zM70 656h3v1h-3zM71 655h1v1h-1zM71 657h1v1h-1zM73 649h3v1h-3zM74 648h1v1h-1zM74 650h1v1h-1zM288 614h3v1h-3zM289 613h1v1h-1zM289 615h1v1h-1zM384 668h3v1h-3zM385 667h1v1h-1zM385 669h1v1h-1zM198 622h3v1h-3zM199 621h1v1h-1zM199 623h1v1h-1zM256 619h3v1h-3zM257 618h1v1h-1zM257 620h1v1h-1zM405 633h3v1h-3zM406 632h1v1h-1zM406 634h1v1h-1zM273 643h3v1h-3zM274 642h1v1h-1zM274 644h1v1h-1zM78 683h3v1h-3zM79 682h1v1h-1zM79 684h1v1h-1zM434 605h3v1h-3zM435 604h1v1h-1zM435 606h1v1h-1zM54 688h3v1h-3zM55 687h1v1h-1zM55 689h1v1h-1zM479 670h3v1h-3zM480 669h1v1h-1zM480 671h1v1h-1zM484 658h3v1h-3zM485 657h1v1h-1zM485 659h1v1h-1zM470 594h3v1h-3zM471 593h1v1h-1zM471 595h1v1h-1zM587 590h3v1h-3zM588 589h1v1h-1zM588 591h1v1h-1zM76 687h3v1h-3zM77 686h1v1h-1zM77 688h1v1h-1zM512 675h3v1h-3zM513 674h1v1h-1zM513 676h1v1h-1zM231 622h3v1h-3zM232 621h1v1h-1zM232 623h1v1h-1zM274 651h3v1h-3zM275 650h1v1h-1zM275 652h1v1h-1zM708 641h3v1h-3zM709 640h1v1h-1zM709 642h1v1h-1zM77 673h3v1h-3zM78 672h1v1h-1zM78 674h1v1h-1zM364 617h3v1h-3zM365 616h1v1h-1zM365 618h1v1h-1zM340 651h3v1h-3zM341 650h1v1h-1zM341 652h1v1h-1zM199 568h3v1h-3zM200 567h1v1h-1zM200 569h1v1h-1zM53 582h3v1h-3zM54 581h1v1h-1zM54 583h1v1h-1zM731 681h3v1h-3zM732 680h1v1h-1zM732 682h1v1h-1zM140 661h3v1h-3zM141 660h1v1h-1zM141 662h1v1h-1zM220 590h3v1h-3zM221 589h1v1h-1zM221 591h1v1h-1zM85 660h3v1h-3zM86 659h1v1h-1zM86 661h1v1h-1zM109 660h3v1h-3zM110 659h1v1h-1zM110 661h1v1h-1zM229 661h3v1h-3zM230 660h1v1h-1zM230 662h1v1h-1zM58 652h3v1h-3zM59 651h1v1h-1zM59 653h1v1h-1zM626 607h3v1h-3zM627 606h1v1h-1zM627 608h1v1h-1zM564 680h3v1h-3zM565 679h1v1h-1zM565 681h1v1h-1zM392 614h3v1h-3zM393 613h1v1h-1zM393 615h1v1h-1zM455 656h3v1h-3zM456 655h1v1h-1zM456 657h1v1h-1zM152 614h3v1h-3zM153 613h1v1h-1zM153 615h1v1h-1zM344 670h3v1h-3zM345 669h1v1h-1zM345 671h1v1h-1zM449 574h3v1h-3zM450 573h1v1h-1zM450 575h1v1h-1zM267 684h3v1h-3zM268 683h1v1h-1zM268 685h1v1h-1zM315 646h3v1h-3zM316 645h1v1h-1zM316 647h1v1h-1zM249 600h3v1h-3zM250 599h1v1h-1zM250 601h1v1h-1zM347 674h3v1h-3zM348 673h1v1h-1zM348 675h1v1h-1zM675 676h3v1h-3zM676 675h1v1h-1zM676 677h1v1h-1zM453 679h3v1h-3zM454 678h1v1h-1zM454 680h1v1h-1zM109 672h3v1h-3zM110 671h1v1h-1zM110 673h1v1h-1zM191 689h3v1h-3zM192 688h1v1h-1zM192 690h1v1h-1zM214 656h3v1h-3zM215 655h1v1h-1zM215 657h1v1h-1zM378 599h3v1h-3zM379 598h1v1h-1zM379 600h1v1h-1zM374 673h3v1h-3zM375 672h1v1h-1zM375 674h1v1h-1zM594 643h3v1h-3zM595 642h1v1h-1zM595 644h1v1h-1zM417 644h3v1h-3zM418 643h1v1h-1zM418 645h1v1h-1zM183 590h3v1h-3zM184 589h1v1h-1zM184 591h1v1h-1zM447 634h3v1h-3zM448 633h1v1h-1zM448 635h1v1h-1zM155 698h3v1h-3zM156 697h1v1h-1zM156 699h1v1h-1zM313 650h3v1h-3zM314 649h1v1h-1zM314 651h1v1h-1zM605 645h3v1h-3zM606 644h1v1h-1zM606 646h1v1h-1zM293 568h3v1h-3zM294 567h1v1h-1zM294 569h1v1h-1zM73 681h3v1h-3zM74 680h1v1h-1zM74 682h1v1h-1zM392 600h3v1h-3zM393 599h1v1h-1zM393 601h1v1h-1zM229 592h3v1h-3zM230 591h1v1h-1zM230 593h1v1h-1zM177 572h3v1h-3zM178 571h1v1h-1zM178 573h1v1h-1zM691 645h3v1h-3zM692 644h1v1h-1zM692 646h1v1h-1zM330 693h3v1h-3zM331 692h1v1h-1zM331 694h1v1h-1zM231 651h3v1h-3zM232 650h1v1h-1zM232 652h1v1h-1zM327 587h3v1h-3zM328 586h1v1h-1zM328 588h1v1h-1zM206 600h3v1h-3zM207 599h1v1h-1zM207 601h1v1h-1zM298 686h3v1h-3zM299 685h1v1h-1zM299 687h1v1h-1zM640 670h3v1h-3zM641 669h1v1h-1zM641 671h1v1h-1zM744 585h3v1h-3zM745 584h1v1h-1zM745 586h1v1h-1zM527 644h3v1h-3zM528 643h1v1h-1zM528 645h1v1h-1zM584 609h3v1h-3zM585 608h1v1h-1zM585 610h1v1h-1zM231 630h3v1h-3zM232 629h1v1h-1zM232 631h1v1h-1zM168 585h3v1h-3zM169 584h1v1h-1zM169 586h1v1h-1zM527 661h3v1h-3zM528 660h1v1h-1zM528 662h1v1h-1zM187 689h3v1h-3zM188 688h1v1h-1zM188 690h1v1h-1zM205 681h3v1h-3zM206 680h1v1h-1zM206 682h1v1h-1zM365 689h3v1h-3zM366 688h1v1h-1zM366 690h1v1h-1zM368 675h3v1h-3zM369 674h1v1h-1zM369 676h1v1h-1zM386 584h3v1h-3zM387 583h1v1h-1zM387 585h1v1h-1zM206 660h3v1h-3zM207 659h1v1h-1zM207 661h1v1h-1zM440 681h3v1h-3zM441 680h1v1h-1zM441 682h1v1h-1zM237 586h3v1h-3zM238 585h1v1h-1zM238 587h1v1h-1zM241 610h3v1h-3zM242 609h1v1h-1zM242 611h1v1h-1zM168 608h3v1h-3zM169 607h1v1h-1zM169 609h1v1h-1zM686 696h3v1h-3zM687 695h1v1h-1zM687 697h1v1h-1zM90 654h3v1h-3zM91 653h1v1h-1zM91 655h1v1h-1zM198 604h3v1h-3zM199 603h1v1h-1zM199 605h1v1h-1zM231 614h3v1h-3zM232 613h1v1h-1zM232 615h1v1h-1zM702 604h3v1h-3zM703 603h1v1h-1zM703 605h1v1h-1zM681 662h3v1h-3zM682 661h1v1h-1zM682 663h1v1h-1zM256 568h3v1h-3zM257 567h1v1h-1zM257 569h1v1h-1zM148 676h3v1h-3zM149 675h1v1h-1zM149 677h1v1h-1zM421 623h3v1h-3zM422 622h1v1h-1zM422 624h1v1h-1zM452 589h3v1h-3zM453 588h1v1h-1zM453 590h1v1h-1zM188 577h3v1h-3zM189 576h1v1h-1zM189 578h1v1h-1zM479 602h3v1h-3zM480 601h1v1h-1zM480 603h1v1h-1zM195 660h3v1h-3zM196 659h1v1h-1zM196 661h1v1h-1zM192 663h3v1h-3zM193 662h1v1h-1zM193 664h1v1h-1zM337 573h3v1h-3zM338 572h1v1h-1zM338 574h1v1h-1zM397 687h3v1h-3zM398 686h1v1h-1zM398 688h1v1h-1zM237 676h3v1h-3zM238 675h1v1h-1zM238 677h1v1h-1zM308 615h3v1h-3zM309 614h1v1h-1zM309 616h1v1h-1zM469 635h3v1h-3zM470 634h1v1h-1zM470 636h1v1h-1zM364 582h3v1h-3zM365 581h1v1h-1zM365 583h1v1h-1zM579 682h3v1h-3zM580 681h1v1h-1zM580 683h1v1h-1zM411 637h3v1h-3zM412 636h1v1h-1zM412 638h1v1h-1zM64 595h3v1h-3zM65 594h1v1h-1zM65 596h1v1h-1zM178 599h3v1h-3zM179 598h1v1h-1zM179 600h1v1h-1zM626 578h3v1h-3zM627 577h1v1h-1zM627 579h1v1h-1zM542 568h3v1h-3zM543 567h1v1h-1zM543 569h1v1h-1zM472 635h3v1h-3zM473 634h1v1h-1zM473 636h1v1h-1zM545 681h3v1h-3zM546 680h1v1h-1zM546 682h1v1h-1zM555 582h3v1h-3zM556 581h1v1h-1zM556 583h1v1h-1zM397 603h3v1h-3zM398 602h1v1h-1zM398 604h1v1h-1zM136 584h3v1h-3zM137 583h1v1h-1zM137 585h1v1h-1zM153 665h3v1h-3zM154 664h1v1h-1zM154 666h1v1h-1zM165 690h3v1h-3zM166 689h1v1h-1zM166 691h1v1h-1zM324 677h3v1h-3zM325 676h1v1h-1zM325 678h1v1h-1zM420 691h3v1h-3zM421 690h1v1h-1zM421 692h1v1h-1zM219 623h3v1h-3zM220 622h1v1h-1zM220 624h1v1h-1zM647 634h3v1h-3zM648 633h1v1h-1zM648 635h1v1h-1zM225 650h3v1h-3zM226 649h1v1h-1zM226 651h1v1h-1zM306 575h3v1h-3zM307 574h1v1h-1zM307 576h1v1h-1zM355 568h3v1h-3zM356 567h1v1h-1zM356 569h1v1h-1zM148 669h3v1h-3zM149 668h1v1h-1zM149 670h1v1h-1zM673 651h3v1h-3zM674 650h1v1h-1zM674 652h1v1h-1zM237 602h3v1h-3zM238 601h1v1h-1zM238 603h1v1h-1zM487 635h3v1h-3zM488 634h1v1h-1zM488 636h1v1h-1zM252 652h3v1h-3zM253 651h1v1h-1zM253 653h1v1h-1zM134 693h3v1h-3zM135 692h1v1h-1zM135 694h1v1h-1zM412 628h3v1h-3zM413 627h1v1h-1zM413 629h1v1h-1zM426 582h3v1h-3zM427 581h1v1h-1zM427 583h1v1h-1zM142 620h3v1h-3zM143 619h1v1h-1zM143 621h1v1h-1zM253 577h3v1h-3zM254 576h1v1h-1zM254 578h1v1h-1zM480 652h3v1h-3zM481 651h1v1h-1zM481 653h1v1h-1zM191 627h3v1h-3zM192 626h1v1h-1zM192 628h1v1h-1zM436 628h3v1h-3zM437 627h1v1h-1zM437 629h1v1h-1zM268 595h3v1h-3zM269 594h1v1h-1zM269 596h1v1h-1zM411 643h3v1h-3zM412 642h1v1h-1zM412 644h1v1h-1zM58 680h3v1h-3zM59 679h1v1h-1zM59 681h1v1h-1zM218 631h3v1h-3zM219 630h1v1h-1zM219 632h1v1h-1zM250 605h3v1h-3zM251 604h1v1h-1zM251 606h1v1h-1zM594 574h3v1h-3zM595 573h1v1h-1zM595 575h1v1h-1zM93 624h3v1h-3zM94 623h1v1h-1zM94 625h1v1h-1zM568 595h3v1h-3zM569 594h1v1h-1zM569 596h1v1h-1zM158 612h3v1h-3zM159 611h1v1h-1zM159 613h1v1h-1zM415 664h3v1h-3zM416 663h1v1h-1zM416 665h1v1h-1zM694 681h3v1h-3zM695 680h1v1h-1zM695 682h1v1h-1zM53 643h3v1h-3zM54 642h1v1h-1zM54 644h1v1h-1zM453 670h3v1h-3zM454 669h1v1h-1zM454 671h1v1h-1zM317 626h3v1h-3zM318 625h1v1h-1zM318 627h1v1h-1zM325 617h3v1h-3zM326 616h1v1h-1zM326 618h1v1h-1zM277 678h3v1h-3zM278 677h1v1h-1zM278 679h1v1h-1zM402 590h3v1h-3zM403 589h1v1h-1zM403 591h1v1h-1zM264 642h3v1h-3zM265 641h1v1h-1zM265 643h1v1h-1zM460 688h3v1h-3zM461 687h1v1h-1zM461 689h1v1h-1zM278 677h3v1h-3zM279 676h1v1h-1zM279 678h1v1h-1zM57 641h3v1h-3zM58 640h1v1h-1zM58 642h1v1h-1zM414 617h3v1h-3zM415 616h1v1h-1zM415 618h1v1h-1zM302 612h3v1h-3zM303 611h1v1h-1zM303 613h1v1h-1zM420 615h3v1h-3zM421 614h1v1h-1zM421 616h1v1h-1zM332 642h3v1h-3zM333 641h1v1h-1zM333 643h1v1h-1zM393 649h3v1h-3zM394 648h1v1h-1zM394 650h1v1h-1zM170 696h3v1h-3zM171 695h1v1h-1zM171 697h1v1h-1zM127 657h3v1h-3zM128 656h1v1h-1zM128 658h1v1h-1zM160 634h3v1h-3zM161 633h1v1h-1zM161 635h1v1h-1zM405 590h3v1h-3zM406 589h1v1h-1zM406 591h1v1h-1zM494 612h3v1h-3zM495 611h1v1h-1zM495 613h1v1h-1zM79 670h3v1h-3zM80 669h1v1h-1zM80 671h1v1h-1zM266 566h3v1h-3zM267 565h1v1h-1zM267 567h1v1h-1zM264 643h3v1h-3zM265 642h1v1h-1zM265 644h1v1h-1zM521 632h3v1h-3zM522 631h1v1h-1zM522 633h1v1h-1zM440 652h3v1h-3zM441 651h1v1h-1zM441 653h1v1h-1zM454 582h3v1h-3zM455 581h1v1h-1zM455 583h1v1h-1zM160 580h3v1h-3zM161 579h1v1h-1zM161 581h1v1h-1zM120 635h3v1h-3zM121 634h1v1h-1zM121 636h1v1h-1zM618 567h3v1h-3zM619 566h1v1h-1zM619 568h1v1h-1zM169 579h3v1h-3zM170 578h1v1h-1zM170 580h1v1h-1zM295 617h3v1h-3zM296 616h1v1h-1zM296 618h1v1h-1zM88 643h3v1h-3zM89 642h1v1h-1zM89 644h1v1h-1zM487 571h3v1h-3zM488 570h1v1h-1zM488 572h1v1h-1zM271 674h3v1h-3zM272 673h1v1h-1zM272 675h1v1h-1zM264 693h3v1h-3zM265 692h1v1h-1zM265 694h1v1h-1zM221 661h3v1h-3zM222 660h1v1h-1zM222 662h1v1h-1zM206 682h3v1h-3zM207 681h1v1h-1zM207 683h1v1h-1zM391 598h3v1h-3zM392 597h1v1h-1zM392 599h1v1h-1zM172 590h3v1h-3zM173 589h1v1h-1zM173 591h1v1h-1zM445 636h3v1h-3zM446 635h1v1h-1zM446 637h1v1h-1zM321 574h3v1h-3zM322 573h1v1h-1zM322 575h1v1h-1zM136 612h3v1h-3zM137 611h1v1h-1zM137 613h1v1h-1zM222 603h3v1h-3zM223 602h1v1h-1zM223 604h1v1h-1zM217 654h3v1h-3zM218 653h1v1h-1zM218 655h1v1h-1zM290 659h3v1h-3zM291 658h1v1h-1zM291 660h1v1h-1zM115 677h3v1h-3zM116 676h1v1h-1zM116 678h1v1h-1zM140 677h3v1h-3zM141 676h1v1h-1zM141 678h1v1h-1zM617 612h3v1h-3zM618 611h1v1h-1zM618 613h1v1h-1zM210 583h3v1h-3zM211 582h1v1h-1zM211 584h1v1h-1zM548 685h3v1h-3zM549 684h1v1h-1zM549 686h1v1h-1zM464 598h3v1h-3zM465 597h1v1h-1zM465 599h1v1h-1zM478 682h3v1h-3zM479 681h1v1h-1zM479 683h1v1h-1zM136 638h3v1h-3zM137 637h1v1h-1zM137 639h1v1h-1zM240 617h3v1h-3zM241 616h1v1h-1zM241 618h1v1h-1zM269 577h3v1h-3zM270 576h1v1h-1zM270 578h1v1h-1zM174 608h3v1h-3zM175 607h1v1h-1zM175 609h1v1h-1zM517 640h3v1h-3zM518 639h1v1h-1zM518 641h1v1h-1zM304 605h3v1h-3zM305 604h1v1h-1zM305 606h1v1h-1zM96 596h3v1h-3zM97 595h1v1h-1zM97 597h1v1h-1zM138 603h3v1h-3zM139 602h1v1h-1zM139 604h1v1h-1zM334 669h3v1h-3zM335 668h1v1h-1zM335 670h1v1h-1zM143 569h3v1h-3zM144 568h1v1h-1zM144 570h1v1h-1zM297 653h3v1h-3zM298 652h1v1h-1zM298 654h1v1h-1zM542 678h3v1h-3zM543 677h1v1h-1zM543 679h1v1h-1zM298 590h3v1h-3zM299 589h1v1h-1zM299 591h1v1h-1zM131 663h3v1h-3zM132 662h1v1h-1zM132 664h1v1h-1zM552 571h3v1h-3zM553 570h1v1h-1zM553 572h1v1h-1zM164 606h3v1h-3zM165 605h1v1h-1zM165 607h1v1h-1zM318 607h3v1h-3zM319 606h1v1h-1zM319 608h1v1h-1zM500 677h3v1h-3zM501 676h1v1h-1zM501 678h1v1h-1zM451 599h3v1h-3zM452 598h1v1h-1zM452 600h1v1h-1zM356 612h3v1h-3zM357 611h1v1h-1zM357 613h1v1h-1zM50 669h3v1h-3zM51 668h1v1h-1zM51 670h1v1h-1zM251 679h3v1h-3zM252 678h1v1h-1zM252 680h1v1h-1zM478 598h3v1h-3zM479 597h1v1h-1zM479 599h1v1h-1zM128 593h3v1h-3zM129 592h1v1h-1zM129 594h1v1h-1zM110 618h3v1h-3zM111 617h1v1h-1zM111 619h1v1h-1zM248 691h3v1h-3zM249 690h1v1h-1zM249 692h1v1h-1zM369 658h3v1h-3zM370 657h1v1h-1zM370 659h1v1h-1zM351 689h3v1h-3zM352 688h1v1h-1zM352 690h1v1h-1zM139 571h3v1h-3zM140 570h1v1h-1zM140 572h1v1h-1zM234 694h3v1h-3zM235 693h1v1h-1zM235 695h1v1h-1zM499 599h3v1h-3zM500 598h1v1h-1zM500 600h1v1h-1zM91 620h3v1h-3zM92 619h1v1h-1zM92 621h1v1h-1zM191 584h3v1h-3zM192 583h1v1h-1zM192 585h1v1h-1zM217 634h3v1h-3zM218 633h1v1h-1zM218 635h1v1h-1zM297 683h3v1h-3zM298 682h1v1h-1zM298 684h1v1h-1zM150 610h3v1h-3zM151 609h1v1h-1zM151 611h1v1h-1zM586 654h3v1h-3zM587 653h1v1h-1zM587 655h1v1h-1zM472 667h3v1h-3zM473 666h1v1h-1zM473 668h1v1h-1zM635 604h3v1h-3zM636 603h1v1h-1zM636 605h1v1h-1zM304 574h3v1h-3zM305 573h1v1h-1zM305 575h1v1h-1zM248 659h3v1h-3zM249 658h1v1h-1zM249 660h1v1h-1zM365 609h3v1h-3zM366 608h1v1h-1zM366 610h1v1h-1zM380 588h3v1h-3zM381 587h1v1h-1zM381 589h1v1h-1zM100 697h3v1h-3zM101 696h1v1h-1zM101 698h1v1h-1zM579 661h3v1h-3zM580 660h1v1h-1zM580 662h1v1h-1zM126 623h3v1h-3zM127 622h1v1h-1zM127 624h1v1h-1zM183 567h3v1h-3zM184 566h1v1h-1zM184 568h1v1h-1zM510 598h3v1h-3zM511 597h1v1h-1zM511 599h1v1h-1zM147 669h3v1h-3zM148 668h1v1h-1zM148 670h1v1h-1zM180 678h3v1h-3zM181 677h1v1h-1zM181 679h1v1h-1zM180 608h3v1h-3zM181 607h1v1h-1zM181 609h1v1h-1zM309 615h3v1h-3zM310 614h1v1h-1zM310 616h1v1h-1zM636 571h3v1h-3zM637 570h1v1h-1zM637 572h1v1h-1zM449 675h3v1h-3zM450 674h1v1h-1zM450 676h1v1h-1zM402 605h3v1h-3zM403 604h1v1h-1zM403 606h1v1h-1zM459 657h3v1h-3zM460 656h1v1h-1zM460 658h1v1h-1zM165 694h3v1h-3zM166 693h1v1h-1zM166 695h1v1h-1zM113 624h3v1h-3zM114 623h1v1h-1zM114 625h1v1h-1zM184 566h3v1h-3zM185 565h1v1h-1zM185 567h1v1h-1zM249 634h3v1h-3zM250 633h1v1h-1zM250 635h1v1h-1zM346 624h3v1h-3zM347 623h1v1h-1zM347 625h1v1h-1zM258 640h3v1h-3zM259 639h1v1h-1zM259 641h1v1h-1zM295 577h3v1h-3zM296 576h1v1h-1zM296 578h1v1h-1zM278 695h3v1h-3zM279 694h1v1h-1zM279 696h1v1h-1zM92 647h3v1h-3zM93 646h1v1h-1zM93 648h1v1h-1zM259 692h3v1h-3zM260 691h1v1h-1zM260 693h1v1h-1zM388 605h3v1h-3zM389 604h1v1h-1zM389 606h1v1h-1zM292 569h3v1h-3zM293 568h1v1h-1zM293 570h1v1h-1zM183 625h3v1h-3zM184 624h1v1h-1zM184 626h1v1h-1zM110 615h3v1h-3zM111 614h1v1h-1zM111 616h1v1h-1zM459 636h3v1h-3zM460 635h1v1h-1zM460 637h1v1h-1zM448 581h3v1h-3zM449 580h1v1h-1zM449 582h1v1h-1zM177 638h3v1h-3zM178 637h1v1h-1zM178 639h1v1h-1zM129 599h3v1h-3zM130 598h1v1h-1zM130 600h1v1h-1zM116 599h3v1h-3zM117 598h1v1h-1zM117 600h1v1h-1zM394 596h3v1h-3zM395 595h1v1h-1zM395 597h1v1h-1zM453 634h3v1h-3zM454 633h1v1h-1zM454 635h1v1h-1zM464 620h3v1h-3zM465 619h1v1h-1zM465 621h1v1h-1zM101 680h3v1h-3zM102 679h1v1h-1zM102 681h1v1h-1zM438 666h3v1h-3zM439 665h1v1h-1zM439 667h1v1h-1zM130 661h3v1h-3zM131 660h1v1h-1zM131 662h1v1h-1zM121 618h3v1h-3zM122 617h1v1h-1zM122 619h1v1h-1zM170 640h3v1h-3zM171 639h1v1h-1zM171 641h1v1h-1zM596 669h3v1h-3zM597 668h1v1h-1zM597 670h1v1h-1zM90 615h3v1h-3zM91 614h1v1h-1zM91 616h1v1h-1zM60 594h3v1h-3zM61 593h1v1h-1zM61 595h1v1h-1zM261 622h3v1h-3zM262 621h1v1h-1zM262 623h1v1h-1zM168 611h3v1h-3zM169 610h1v1h-1zM169 612h1v1h-1zM632 615h3v1h-3zM633 614h1v1h-1zM633 616h1v1h-1zM558 646h3v1h-3zM559 645h1v1h-1zM559 647h1v1h-1zM120 672h3v1h-3zM121 671h1v1h-1zM121 673h1v1h-1zM129 655h3v1h-3zM130 654h1v1h-1zM130 656h1v1h-1zM229 625h3v1h-3zM230 624h1v1h-1zM230 626h1v1h-1zM130 580h3v1h-3zM131 579h1v1h-1zM131 581h1v1h-1zM614 639h3v1h-3zM615 638h1v1h-1zM615 640h1v1h-1zM254 616h3v1h-3zM255 615h1v1h-1zM255 617h1v1h-1zM151 637h3v1h-3zM152 636h1v1h-1zM152 638h1v1h-1zM718 611h3v1h-3zM719 610h1v1h-1zM719 612h1v1h-1zM156 682h3v1h-3zM157 681h1v1h-1zM157 683h1v1h-1zM614 590h3v1h-3zM615 589h1v1h-1zM615 591h1v1h-1zM326 587h3v1h-3zM327 586h1v1h-1zM327 588h1v1h-1zM103 594h3v1h-3zM104 593h1v1h-1zM104 595h1v1h-1zM80 614h3v1h-3zM81 613h1v1h-1zM81 615h1v1h-1zM379 617h3v1h-3zM380 616h1v1h-1zM380 618h1v1h-1zM299 643h3v1h-3zM300 642h1v1h-1zM300 644h1v1h-1zM285 627h3v1h-3zM286 626h1v1h-1zM286 628h1v1h-1zM745 585h3v1h-3zM746 584h1v1h-1zM746 586h1v1h-1zM523 602h3v1h-3zM524 601h1v1h-1zM524 603h1v1h-1zM402 641h3v1h-3zM403 640h1v1h-1zM403 642h1v1h-1zM749 640h3v1h-3zM750 639h1v1h-1zM750 641h1v1h-1zM497 603h3v1h-3zM498 602h1v1h-1zM498 604h1v1h-1zM264 664h3v1h-3zM265 663h1v1h-1zM265 665h1v1h-1zM408 612h3v1h-3zM409 611h1v1h-1zM409 613h1v1h-1zM438 574h3v1h-3zM439 573h1v1h-1zM439 575h1v1h-1zM287 697h3v1h-3zM288 696h1v1h-1zM288 698h1v1h-1zM389 598h3v1h-3zM390 597h1v1h-1zM390 599h1v1h-1zM215 584h3v1h-3zM216 583h1v1h-1zM216 585h1v1h-1zM55 626h3v1h-3zM56 625h1v1h-1zM56 627h1v1h-1zM364 606h3v1h-3zM365 605h1v1h-1zM365 607h1v1h-1zM169 606h3v1h-3zM170 605h1v1h-1zM170 607h1v1h-1zM267 639h3v1h-3zM268 638h1v1h-1zM268 640h1v1h-1zM106 643h3v1h-3zM107 642h1v1h-1zM107 644h1v1h-1zM662 630h3v1h-3zM663 629h1v1h-1zM663 631h1v1h-1zM231 587h3v1h-3zM232 586h1v1h-1zM232 588h1v1h-1zM238 595h3v1h-3zM239 594h1v1h-1zM239 596h1v1h-1zM331 646h3v1h-3zM332 645h1v1h-1zM332 647h1v1h-1zM188 694h3v1h-3zM189 693h1v1h-1zM189 695h1v1h-1zM473 673h3v1h-3zM474 672h1v1h-1zM474 674h1v1h-1zM146 637h3v1h-3zM147 636h1v1h-1zM147 638h1v1h-1zM280 652h3v1h-3zM281 651h1v1h-1zM281 653h1v1h-1zM335 610h3v1h-3zM336 609h1v1h-1zM336 611h1v1h-1zM90 572h3v1h-3zM91 571h1v1h-1zM91 573h1v1h-1zM491 631h3v1h-3zM492 630h1v1h-1zM492 632h1v1h-1zM471 627h3v1h-3zM472 626h1v1h-1zM472 628h1v1h-1zM59 641h3v1h-3zM60 640h1v1h-1zM60 642h1v1h-1zM746 647h3v1h-3zM747 646h1v1h-1zM747 648h1v1h-1zM115 584h3v1h-3zM116 583h1v1h-1zM116 585h1v1h-1zM590 674h3v1h-3zM591 673h1v1h-1zM591 675h1v1h-1zM348 644h3v1h-3zM349 643h1v1h-1zM349 645h1v1h-1zM441 646h3v1h-3zM442 645h1v1h-1zM442 647h1v1h-1zM283 600h3v1h-3zM284 599h1v1h-1zM284 601h1v1h-1zM369 635h3v1h-3zM370 634h1v1h-1zM370 636h1v1h-1zM56 653h3v1h-3zM57 652h1v1h-1zM57 654h1v1h-1zM583 569h3v1h-3zM584 568h1v1h-1zM584 570h1v1h-1zM144 632h3v1h-3zM145 631h1v1h-1zM145 633h1v1h-1zM441 690h3v1h-3zM442 689h1v1h-1zM442 691h1v1h-1zM307 589h3v1h-3zM308 588h1v1h-1zM308 590h1v1h-1zM164 669h3v1h-3zM165 668h1v1h-1zM165 670h1v1h-1zM221 632h3v1h-3zM222 631h1v1h-1zM222 633h1v1h-1zM498 672h3v1h-3zM499 671h1v1h-1zM499 673h1v1h-1zM374 686h3v1h-3zM375 685h1v1h-1zM375 687h1v1h-1zM126 574h3v1h-3zM127 573h1v1h-1zM127 575h1v1h-1zM505 680h3v1h-3zM506 679h1v1h-1zM506 681h1v1h-1zM92 620h3v1h-3zM93 619h1v1h-1zM93 621h1v1h-1zM492 599h3v1h-3zM493 598h1v1h-1zM493 600h1v1h-1zM234 596h3v1h-3zM235 595h1v1h-1zM235 597h1v1h-1zM193 651h3v1h-3zM194 650h1v1h-1zM194 652h1v1h-1zM260 594h3v1h-3zM261 593h1v1h-1zM261 595h1v1h-1zM451 680h3v1h-3zM452 679h1v1h-1zM452 681h1v1h-1zM249 630h3v1h-3zM250 629h1v1h-1zM250 631h1v1h-1zM369 683h3v1h-3zM370 682h1v1h-1zM370 684h1v1h-1zM197 613h3v1h-3zM198 612h1v1h-1zM198 614h1v1h-1zM178 698h3v1h-3zM179 697h1v1h-1zM179 699h1v1h-1zM259 580h3v1h-3zM260 579h1v1h-1zM260 581h1v1h-1zM736 687h3v1h-3zM737 686h1v1h-1zM737 688h1v1h-1zM156 578h3v1h-3zM157 577h1v1h-1zM157 579h1v1h-1zM168 578h3v1h-3zM169 577h1v1h-1zM169 579h1v1h-1zM289 661h3v1h-3zM290 660h1v1h-1zM290 662h1v1h-1zM73 671h3v1h-3zM74 670h1v1h-1zM74 672h1v1h-1zM536 633h3v1h-3zM537 632h1v1h-1zM537 634h1v1h-1zM213 579h3v1h-3zM214 578h1v1h-1zM214 580h1v1h-1zM64 608h3v1h-3zM65 607h1v1h-1zM65 609h1v1h-1zM669 630h3v1h-3zM670 629h1v1h-1zM670 631h1v1h-1zM145 589h3v1h-3zM146 588h1v1h-1zM146 590h1v1h-1zM533 664h3v1h-3zM534 663h1v1h-1zM534 665h1v1h-1zM403 613h3v1h-3zM404 612h1v1h-1zM404 614h1v1h-1zM296 694h3v1h-3zM297 693h1v1h-1zM297 695h1v1h-1zM242 601h3v1h-3zM243 600h1v1h-1zM243 602h1v1h-1zM98 633h3v1h-3zM99 632h1v1h-1zM99 634h1v1h-1zM337 614h3v1h-3zM338 613h1v1h-1zM338 615h1v1h-1zM57 652h3v1h-3zM58 651h1v1h-1zM58 653h1v1h-1zM433 657h3v1h-3zM434 656h1v1h-1zM434 658h1v1h-1zM274 695h3v1h-3zM275 694h1v1h-1zM275 696h1v1h-1zM322 620h3v1h-3zM323 619h1v1h-1zM323 621h1v1h-1zM150 566h3v1h-3zM151 565h1v1h-1zM151 567h1v1h-1zM229 616h3v1h-3zM230 615h1v1h-1zM230 617h1v1h-1zM219 581h3v1h-3zM220 580h1v1h-1zM220 582h1v1h-1zM690 658h3v1h-3zM691 657h1v1h-1zM691 659h1v1h-1zM278 639h3v1h-3zM279 638h1v1h-1zM279 640h1v1h-1zM272 566h3v1h-3zM273 565h1v1h-1zM273 567h1v1h-1zM409 698h3v1h-3zM410 697h1v1h-1zM410 699h1v1h-1zM215 664h3v1h-3zM216 663h1v1h-1zM216 665h1v1h-1zM317 618h3v1h-3zM318 617h1v1h-1zM318 619h1v1h-1zM421 656h3v1h-3zM422 655h1v1h-1zM422 657h1v1h-1zM277 638h3v1h-3zM278 637h1v1h-1zM278 639h1v1h-1zM207 601h3v1h-3zM208 600h1v1h-1zM208 602h1v1h-1zM386 584h3v1h-3zM387 583h1v1h-1zM387 585h1v1h-1zM419 674h3v1h-3zM420 673h1v1h-1zM420 675h1v1h-1zM218 675h3v1h-3zM219 674h1v1h-1zM219 676h1v1h-1zM374 676h3v1h-3zM375 675h1v1h-1zM375 677h1v1h-1zM80 676h3v1h-3zM81 675h1v1h-1zM81 677h1v1h-1zM626 586h3v1h-3zM627 585h1v1h-1zM627 587h1v1h-1zM227 613h3v1h-3zM228 612h1v1h-1zM228 614h1v1h-1zM369 618h3v1h-3zM370 617h1v1h-1zM370 619h1v1h-1zM366 672h3v1h-3zM367 671h1v1h-1zM367 673h1v1h-1zM584 656h3v1h-3zM585 655h1v1h-1zM585 657h1v1h-1zM308 597h3v1h-3zM309 596h1v1h-1zM309 598h1v1h-1zM311 616h3v1h-3zM312 615h1v1h-1zM312 617h1v1h-1zM62 641h3v1h-3zM63 640h1v1h-1zM63 642h1v1h-1zM90 661h3v1h-3zM91 660h1v1h-1zM91 662h1v1h-1zM243 598h3v1h-3zM244 597h1v1h-1zM244 599h1v1h-1zM638 650h3v1h-3zM639 649h1v1h-1zM639 651h1v1h-1zM348 648h3v1h-3zM349 647h1v1h-1zM349 649h1v1h-1zM311 624h3v1h-3zM312 623h1v1h-1zM312 625h1v1h-1zM308 605h3v1h-3zM309 604h1v1h-1zM309 606h1v1h-1zM337 673h3v1h-3zM338 672h1v1h-1zM338 674h1v1h-1zM298 642h3v1h-3zM299 641h1v1h-1zM299 643h1v1h-1zM312 609h3v1h-3zM313 608h1v1h-1zM313 610h1v1h-1zM99 616h3v1h-3zM100 615h1v1h-1zM100 617h1v1h-1zM420 685h3v1h-3zM421 684h1v1h-1zM421 686h1v1h-1zM583 644h3v1h-3zM584 643h1v1h-1zM584 645h1v1h-1zM376 677h3v1h-3zM377 676h1v1h-1zM377 678h1v1h-1zM342 684h3v1h-3zM343 683h1v1h-1zM343 685h1v1h-1zM360 634h3v1h-3zM361 633h1v1h-1zM361 635h1v1h-1zM78 639h3v1h-3zM79 638h1v1h-1zM79 640h1v1h-1zM133 576h3v1h-3zM134 575h1v1h-1zM134 577h1v1h-1zM626 577h3v1h-3zM627 576h1v1h-1zM627 578h1v1h-1zM88 660h3v1h-3zM89 659h1v1h-1zM89 661h1v1h-1zM390 657h3v1h-3zM391 656h1v1h-1zM391 658h1v1h-1zM344 698h3v1h-3zM345 697h1v1h-1zM345 699h1v1h-1zM152 634h3v1h-3zM153 633h1v1h-1zM153 635h1v1h-1zM54 602h3v1h-3zM55 601h1v1h-1zM55 603h1v1h-1zM234 599h3v1h-3zM235 598h1v1h-1zM235 600h1v1h-1zM410 572h3v1h-3zM411 571h1v1h-1zM411 573h1v1h-1zM264 672h3v1h-3zM265 671h1v1h-1zM265 673h1v1h-1zM192 637h3v1h-3zM193 636h1v1h-1zM193 638h1v1h-1zM313 631h3v1h-3zM314 630h1v1h-1zM314 632h1v1h-1zM461 672h3v1h-3zM462 671h1v1h-1zM462 673h1v1h-1zM191 639h3v1h-3zM192 638h1v1h-1zM192 640h1v1h-1zM86 636h3v1h-3zM87 635h1v1h-1zM87 637h1v1h-1zM338 609h3v1h-3zM339 608h1v1h-1zM339 610h1v1h-1zM242 604h3v1h-3zM243 603h1v1h-1zM243 605h1v1h-1zM467 690h3v1h-3zM468 689h1v1h-1zM468 691h1v1h-1zM363 573h3v1h-3zM364 572h1v1h-1zM364 574h1v1h-1zM355 572h3v1h-3zM356 571h1v1h-1zM356 573h1v1h-1zM658 645h3v1h-3zM659 644h1v1h-1zM659 646h1v1h-1zM177 640h3v1h-3zM178 639h1v1h-1zM178 641h1v1h-1zM257 677h3v1h-3zM258 676h1v1h-1zM258 678h1v1h-1zM152 593h3v1h-3zM153 592h1v1h-1zM153 594h1v1h-1zM121 670h3v1h-3zM122 669h1v1h-1zM122 671h1v1h-1zM514 686h3v1h-3zM515 685h1v1h-1zM515 687h1v1h-1zM533 573h3v1h-3zM534 572h1v1h-1zM534 574h1v1h-1zM540 677h3v1h-3zM541 676h1v1h-1zM541 678h1v1h-1zM257 643h3v1h-3zM258 642h1v1h-1zM258 644h1v1h-1zM274 586h3v1h-3zM275 585h1v1h-1zM275 587h1v1h-1zM643 672h3v1h-3zM644 671h1v1h-1zM644 673h1v1h-1zM73 651h3v1h-3zM74 650h1v1h-1zM74 652h1v1h-1zM207 578h3v1h-3zM208 577h1v1h-1zM208 579h1v1h-1zM377 623h3v1h-3zM378 622h1v1h-1zM378 624h1v1h-1zM528 676h3v1h-3zM529 675h1v1h-1zM529 677h1v1h-1zM136 698h3v1h-3zM137 697h1v1h-1zM137 699h1v1h-1zM254 665h3v1h-3zM255 664h1v1h-1zM255 666h1v1h-1zM115 680h3v1h-3zM116 679h1v1h-1zM116 681h1v1h-1zM471 577h3v1h-3zM472 576h1v1h-1zM472 578h1v1h-1zM148 684h3v1h-3zM149 683h1v1h-1zM149 685h1v1h-1zM646 688h3v1h-3zM647 687h1v1h-1zM647 689h1v1h-1zM72 694h3v1h-3zM73 693h1v1h-1zM73 695h1v1h-1zM292 653h3v1h-3zM293 652h1v1h-1zM293 654h1v1h-1zM85 625h3v1h-3zM86 624h1v1h-1zM86 626h1v1h-1zM224 589h3v1h-3zM225 588h1v1h-1zM225 590h1v1h-1zM98 578h3v1h-3zM99 577h1v1h-1zM99 579h1v1h-1zM469 570h3v1h-3zM470 569h1v1h-1zM470 571h1v1h-1zM411 652h3v1h-3zM412 651h1v1h-1zM412 653h1v1h-1zM143 612h3v1h-3zM144 611h1v1h-1zM144 613h1v1h-1zM314 587h3v1h-3zM315 586h1v1h-1zM315 588h1v1h-1zM169 610h3v1h-3zM170 609h1v1h-1zM170 611h1v1h-1zM388 578h3v1h-3zM389 577h1v1h-1zM389 579h1v1h-1zM669 631h3v1h-3zM670 630h1v1h-1zM670 632h1v1h-1zM427 628h3v1h-3zM428 627h1v1h-1zM428 629h1v1h-1zM165 633h3v1h-3zM166 632h1v1h-1zM166 634h1v1h-1zM308 619h3v1h-3zM309 618h1v1h-1zM309 620h1v1h-1zM193 597h3v1h-3zM194 596h1v1h-1zM194 598h1v1h-1zM677 691h3v1h-3zM678 690h1v1h-1zM678 692h1v1h-1zM394 641h3v1h-3zM395 640h1v1h-1zM395 642h1v1h-1zM535 665h3v1h-3zM536 664h1v1h-1zM536 666h1v1h-1zM158 570h3v1h-3zM159 569h1v1h-1zM159 571h1v1h-1zM327 604h3v1h-3zM328 603h1v1h-1zM328 605h1v1h-1zM677 642h3v1h-3zM678 641h1v1h-1zM678 643h1v1h-1zM214 670h3v1h-3zM215 669h1v1h-1zM215 671h1v1h-1zM551 598h3v1h-3zM552 597h1v1h-1zM552 599h1v1h-1zM79 658h3v1h-3zM80 657h1v1h-1zM80 659h1v1h-1zM699 691h3v1h-3zM700 690h1v1h-1zM700 692h1v1h-1zM340 577h3v1h-3zM341 576h1v1h-1zM341 578h1v1h-1zM222 656h3v1h-3zM223 655h1v1h-1zM223 657h1v1h-1zM156 584h3v1h-3zM157 583h1v1h-1zM157 585h1v1h-1zM189 610h3v1h-3zM190 609h1v1h-1zM190 611h1v1h-1zM400 686h3v1h-3zM401 685h1v1h-1zM401 687h1v1h-1zM190 678h3v1h-3zM191 677h1v1h-1zM191 679h1v1h-1zM604 661h3v1h-3zM605 660h1v1h-1zM605 662h1v1h-1zM296 694h3v1h-3zM297 693h1v1h-1zM297 695h1v1h-1zM145 690h3v1h-3zM146 689h1v1h-1zM146 691h1v1h-1zM466 675h3v1h-3zM467 674h1v1h-1zM467 676h1v1h-1zM260 636h3v1h-3zM261 635h1v1h-1zM261 637h1v1h-1zM716 694h3v1h-3zM717 693h1v1h-1zM717 695h1v1h-1zM605 677h3v1h-3zM606 676h1v1h-1zM606 678h1v1h-1zM213 626h3v1h-3zM214 625h1v1h-1zM214 627h1v1h-1zM216 686h3v1h-3zM217 685h1v1h-1zM217 687h1v1h-1zM326 671h3v1h-3zM327 670h1v1h-1zM327 672h1v1h-1zM111 677h3v1h-3zM112 676h1v1h-1zM112 678h1v1h-1zM289 677h3v1h-3zM290 676h1v1h-1zM290 678h1v1h-1zM609 631h3v1h-3zM610 630h1v1h-1zM610 632h1v1h-1zM61 674h3v1h-3zM62 673h1v1h-1zM62 675h1v1h-1zM345 626h3v1h-3zM346 625h1v1h-1zM346 627h1v1h-1zM286 613h3v1h-3zM287 612h1v1h-1zM287 614h1v1h-1zM255 602h3v1h-3zM256 601h1v1h-1zM256 603h1v1h-1zM135 571h3v1h-3zM136 570h1v1h-1zM136 572h1v1h-1zM630 602h3v1h-3zM631 601h1v1h-1zM631 603h1v1h-1zM208 647h3v1h-3zM209 646h1v1h-1zM209 648h1v1h-1zM183 587h3v1h-3zM184 586h1v1h-1zM184 588h1v1h-1zM421 589h3v1h-3zM422 588h1v1h-1zM422 590h1v1h-1zM620 612h3v1h-3zM621 611h1v1h-1zM621 613h1v1h-1zM121 680h3v1h-3zM122 679h1v1h-1zM122 681h1v1h-1zM412 689h3v1h-3zM413 688h1v1h-1zM413 690h1v1h-1zM103 625h3v1h-3zM104 624h1v1h-1zM104 626h1v1h-1zM314 655h3v1h-3zM315 654h1v1h-1zM315 656h1v1h-1zM306 573h3v1h-3zM307 572h1v1h-1zM307 574h1v1h-1zM442 665h3v1h-3zM443 664h1v1h-1zM443 666h1v1h-1zM578 609h3v1h-3zM579 608h1v1h-1zM579 610h1v1h-1zM146 684h3v1h-3zM147 683h1v1h-1zM147 685h1v1h-1zM151 642h3v1h-3zM152 641h1v1h-1zM152 643h1v1h-1zM82 665h3v1h-3zM83 664h1v1h-1zM83 666h1v1h-1zM502 667h3v1h-3zM503 666h1v1h-1zM503 668h1v1h-1zM255 621h3v1h-3zM256 620h1v1h-1zM256 622h1v1h-1zM318 660h3v1h-3zM319 659h1v1h-1zM319 661h1v1h-1zM537 587h3v1h-3zM538 586h1v1h-1zM538 588h1v1h-1zM148 682h3v1h-3zM149 681h1v1h-1zM149 683h1v1h-1zM164 588h3v1h-3zM165 587h1v1h-1zM165 589h1v1h-1zM269 605h3v1h-3zM270 604h1v1h-1zM270 606h1v1h-1zM268 592h3v1h-3zM269 591h1v1h-1zM269 593h1v1h-1zM276 580h3v1h-3zM277 579h1v1h-1zM277 581h1v1h-1zM233 617h3v1h-3zM234 616h1v1h-1zM234 618h1v1h-1zM193 625h3v1h-3zM194 624h1v1h-1zM194 626h1v1h-1zM157 628h3v1h-3zM158 627h1v1h-1zM158 629h1v1h-1zM443 666h3v1h-3zM444 665h1v1h-1zM444 667h1v1h-1zM244 688h3v1h-3zM245 687h1v1h-1zM245 689h1v1h-1zM423 649h3v1h-3zM424 648h1v1h-1zM424 650h1v1h-1zM233 571h3v1h-3zM234 570h1v1h-1zM234 572h1v1h-1zM299 601h3v1h-3zM300 600h1v1h-1zM300 602h1v1h-1zM221 638h3v1h-3zM222 637h1v1h-1zM222 639h1v1h-1zM340 580h3v1h-3zM341 579h1v1h-1zM341 581h1v1h-1zM266 694h3v1h-3zM267 693h1v1h-1zM267 695h1v1h-1zM290 673h3v1h-3zM291 672h1v1h-1zM291 674h1v1h-1zM296 681h3v1h-3zM297 680h1v1h-1zM297 682h1v1h-1zM424 655h3v1h-3zM425 654h1v1h-1zM425 656h1v1h-1zM288 620h3v1h-3zM289 619h1v1h-1zM289 621h1v1h-1zM334 602h3v1h-3zM335 601h1v1h-1zM335 603h1v1h-1zM641 655h3v1h-3zM642 654h1v1h-1zM642 656h1v1h-1zM142 659h3v1h-3zM143 658h1v1h-1zM143 660h1v1h-1zM481 574h3v1h-3zM482 573h1v1h-1zM482 575h1v1h-1zM242 595h3v1h-3zM243 594h1v1h-1zM243 596h1v1h-1zM116 695h3v1h-3zM117 694h1v1h-1zM117 696h1v1h-1zM543 677h3v1h-3zM544 676h1v1h-1zM544 678h1v1h-1zM279 649h3v1h-3zM280 648h1v1h-1zM280 650h1v1h-1zM147 573h3v1h-3zM148 572h1v1h-1zM148 574h1v1h-1zM364 673h3v1h-3zM365 672h1v1h-1zM365 674h1v1h-1zM77 580h3v1h-3zM78 579h1v1h-1zM78 581h1v1h-1zM208 611h3v1h-3zM209 610h1v1h-1zM209 612h1v1h-1zM283 594h3v1h-3zM284 593h1v1h-1zM284 595h1v1h-1zM609 677h3v1h-3zM610 676h1v1h-1zM610 678h1v1h-1zM71 569h3v1h-3zM72 568h1v1h-1zM72 570h1v1h-1zM405 574h3v1h-3zM406 573h1v1h-1zM406 575h1v1h-1zM462 634h3v1h-3zM463 633h1v1h-1zM463 635h1v1h-1zM465 681h3v1h-3zM466 680h1v1h-1zM466 682h1v1h-1zM745 629h3v1h-3zM746 628h1v1h-1zM746 630h1v1h-1zM144 656h3v1h-3zM145 655h1v1h-1zM145 657h1v1h-1zM290 619h3v1h-3zM291 618h1v1h-1zM291 620h1v1h-1zM249 663h3v1h-3zM250 662h1v1h-1zM250 664h1v1h-1zM413 592h3v1h-3zM414 591h1v1h-1zM414 593h1v1h-1zM546 601h3v1h-3zM547 600h1v1h-1zM547 602h1v1h-1zM444 695h3v1h-3zM445 694h1v1h-1zM445 696h1v1h-1zM557 487h3v1h-3zM558 486h1v1h-1zM558 488h1v1h-1zM494 499h3v1h-3zM495 498h1v1h-1zM495 500h1v1h-1zM265 514h3v1h-3zM266 513h1v1h-1zM266 515h1v1h-1zM370 498h3v1h-3zM371 497h1v1h-1zM371 499h1v1h-1zM629 531h3v1h-3zM630 530h1v1h-1zM630 532h1v1h-1zM408 487h3v1h-3zM409 486h1v1h-1zM409 488h1v1h-1z" fill="rgba(215,215,80,.18)"/><path d="M420 624h1v1h-1zM180 672h1v1h-1zM172 662h1v1h-1zM443 634h1v1h-1zM125 599h1v1h-1zM246 633h1v1h-1zM482 634h1v1h-1zM426 691h1v1h-1zM643 582h1v1h-1zM362 598h1v1h-1zM102 670h1v1h-1zM151 694h1v1h-1zM205 618h1v1h-1zM637 623h1v1h-1zM414 592h1v1h-1zM275 568h1v1h-1zM441 568h1v1h-1zM284 634h1v1h-1zM96 670h1v1h-1zM736 601h1v1h-1zM78 601h1v1h-1zM142 687h1v1h-1zM628 585h1v1h-1zM544 573h1v1h-1zM102 650h1v1h-1zM616 679h1v1h-1zM97 626h1v1h-1zM290 689h1v1h-1zM239 636h1v1h-1zM219 587h1v1h-1zM86 607h1v1h-1zM266 604h1v1h-1zM403 612h1v1h-1zM63 568h1v1h-1zM184 690h1v1h-1zM125 623h1v1h-1zM328 657h1v1h-1zM499 612h1v1h-1zM89 575h1v1h-1zM573 587h1v1h-1zM110 681h1v1h-1zM523 598h1v1h-1zM257 586h1v1h-1zM365 693h1v1h-1zM223 607h1v1h-1zM302 616h1v1h-1zM385 592h1v1h-1zM406 601h1v1h-1zM114 571h1v1h-1zM66 596h1v1h-1zM463 665h1v1h-1zM280 585h1v1h-1zM81 684h1v1h-1zM623 635h1v1h-1zM213 583h1v1h-1zM305 677h1v1h-1zM444 649h1v1h-1zM53 665h1v1h-1zM405 653h1v1h-1zM97 599h1v1h-1zM103 663h1v1h-1zM195 695h1v1h-1zM399 629h1v1h-1zM485 576h1v1h-1zM154 664h1v1h-1zM265 567h1v1h-1zM93 655h1v1h-1zM256 627h1v1h-1zM379 684h1v1h-1zM191 690h1v1h-1zM63 675h1v1h-1zM240 691h1v1h-1zM199 584h1v1h-1zM144 633h1v1h-1zM214 630h1v1h-1zM68 631h1v1h-1zM368 584h1v1h-1zM293 677h1v1h-1zM52 677h1v1h-1zM135 660h1v1h-1zM313 698h1v1h-1zM466 622h1v1h-1zM244 579h1v1h-1zM238 591h1v1h-1zM314 683h1v1h-1zM438 572h1v1h-1zM252 689h1v1h-1zM140 611h1v1h-1zM260 695h1v1h-1zM234 606h1v1h-1zM443 588h1v1h-1zM164 686h1v1h-1zM401 686h1v1h-1zM149 578h1v1h-1zM292 597h1v1h-1zM233 684h1v1h-1zM342 616h1v1h-1zM289 602h1v1h-1zM733 632h1v1h-1zM203 599h1v1h-1zM332 692h1v1h-1zM66 660h1v1h-1zM464 618h1v1h-1zM226 586h1v1h-1zM419 691h1v1h-1zM439 670h1v1h-1zM214 651h1v1h-1zM265 599h1v1h-1zM130 635h1v1h-1zM461 595h1v1h-1zM474 606h1v1h-1zM386 598h1v1h-1zM267 632h1v1h-1zM232 689h1v1h-1zM210 610h1v1h-1zM347 592h1v1h-1zM406 694h1v1h-1zM270 596h1v1h-1zM207 605h1v1h-1zM183 621h1v1h-1zM154 594h1v1h-1zM87 618h1v1h-1zM181 665h1v1h-1zM73 616h1v1h-1zM314 588h1v1h-1zM53 612h1v1h-1zM724 694h1v1h-1zM197 675h1v1h-1zM85 615h1v1h-1zM307 570h1v1h-1zM340 667h1v1h-1zM79 574h1v1h-1zM290 693h1v1h-1zM485 661h1v1h-1zM274 566h1v1h-1zM68 629h1v1h-1zM323 623h1v1h-1zM179 664h1v1h-1zM479 608h1v1h-1zM306 576h1v1h-1zM190 598h1v1h-1zM96 639h1v1h-1zM280 683h1v1h-1zM110 632h1v1h-1zM216 648h1v1h-1zM136 605h1v1h-1zM450 664h1v1h-1zM191 598h1v1h-1zM159 642h1v1h-1zM281 697h1v1h-1zM408 673h1v1h-1zM123 674h1v1h-1zM79 581h1v1h-1zM184 643h1v1h-1zM234 691h1v1h-1zM125 648h1v1h-1zM204 584h1v1h-1zM194 645h1v1h-1zM510 567h1v1h-1zM281 590h1v1h-1zM271 671h1v1h-1zM437 579h1v1h-1zM329 651h1v1h-1zM115 658h1v1h-1zM339 606h1v1h-1zM450 621h1v1h-1zM307 662h1v1h-1zM194 685h1v1h-1zM349 620h1v1h-1zM165 639h1v1h-1zM113 615h1v1h-1zM406 603h1v1h-1zM127 673h1v1h-1zM140 695h1v1h-1zM391 689h1v1h-1zM324 648h1v1h-1zM632 670h1v1h-1zM207 678h1v1h-1zM635 595h1v1h-1zM332 617h1v1h-1zM137 662h1v1h-1zM683 640h1v1h-1zM585 677h1v1h-1zM134 639h1v1h-1zM493 621h1v1h-1zM461 653h1v1h-1zM365 569h1v1h-1zM487 597h1v1h-1zM374 628h1v1h-1zM126 623h1v1h-1zM115 633h1v1h-1zM79 576h1v1h-1zM411 633h1v1h-1zM317 584h1v1h-1zM187 631h1v1h-1zM167 689h1v1h-1zM97 666h1v1h-1zM162 602h1v1h-1zM626 632h1v1h-1zM236 608h1v1h-1zM76 587h1v1h-1zM604 636h1v1h-1zM499 682h1v1h-1zM442 683h1v1h-1zM124 649h1v1h-1zM328 601h1v1h-1zM304 624h1v1h-1zM175 572h1v1h-1zM628 651h1v1h-1zM518 566h1v1h-1zM74 647h1v1h-1zM355 685h1v1h-1zM144 652h1v1h-1zM66 613h1v1h-1zM125 595h1v1h-1zM462 593h1v1h-1zM490 583h1v1h-1zM156 650h1v1h-1zM334 567h1v1h-1zM505 612h1v1h-1zM506 690h1v1h-1zM568 686h1v1h-1zM82 619h1v1h-1zM218 669h1v1h-1zM59 691h1v1h-1zM151 646h1v1h-1zM408 674h1v1h-1zM174 605h1v1h-1zM85 670h1v1h-1zM555 678h1v1h-1zM210 596h1v1h-1zM78 665h1v1h-1zM552 639h1v1h-1zM358 635h1v1h-1zM238 694h1v1h-1zM203 568h1v1h-1zM234 664h1v1h-1zM281 609h1v1h-1zM219 649h1v1h-1zM267 648h1v1h-1zM105 585h1v1h-1zM69 689h1v1h-1zM294 569h1v1h-1zM80 650h1v1h-1zM97 614h1v1h-1zM679 681h1v1h-1zM126 580h1v1h-1zM75 673h1v1h-1zM496 579h1v1h-1zM119 593h1v1h-1zM275 568h1v1h-1zM231 661h1v1h-1zM310 694h1v1h-1zM486 620h1v1h-1zM358 612h1v1h-1zM203 578h1v1h-1zM628 566h1v1h-1zM193 696h1v1h-1zM54 631h1v1h-1zM612 631h1v1h-1zM295 600h1v1h-1zM202 632h1v1h-1zM128 576h1v1h-1zM301 618h1v1h-1zM678 684h1v1h-1zM68 601h1v1h-1zM318 597h1v1h-1zM375 666h1v1h-1zM296 586h1v1h-1zM574 624h1v1h-1zM139 683h1v1h-1zM218 606h1v1h-1zM159 598h1v1h-1zM281 587h1v1h-1zM282 695h1v1h-1zM564 693h1v1h-1zM122 696h1v1h-1zM357 650h1v1h-1zM126 617h1v1h-1zM74 671h1v1h-1zM496 584h1v1h-1zM476 664h1v1h-1zM347 662h1v1h-1zM371 649h1v1h-1zM119 670h1v1h-1zM227 626h1v1h-1zM489 655h1v1h-1zM325 695h1v1h-1zM77 587h1v1h-1zM417 642h1v1h-1zM432 634h1v1h-1zM418 692h1v1h-1zM199 618h1v1h-1zM588 696h1v1h-1zM301 602h1v1h-1zM332 621h1v1h-1zM347 612h1v1h-1zM237 664h1v1h-1zM205 618h1v1h-1zM200 669h1v1h-1zM381 596h1v1h-1zM258 582h1v1h-1zM316 622h1v1h-1zM182 661h1v1h-1zM249 606h1v1h-1zM389 650h1v1h-1zM515 689h1v1h-1zM653 676h1v1h-1zM149 650h1v1h-1zM61 692h1v1h-1zM513 579h1v1h-1zM151 669h1v1h-1zM295 686h1v1h-1zM609 684h1v1h-1zM190 636h1v1h-1zM237 584h1v1h-1zM398 628h1v1h-1zM152 632h1v1h-1zM55 628h1v1h-1zM447 677h1v1h-1zM315 693h1v1h-1zM104 650h1v1h-1zM71 656h1v1h-1zM74 649h1v1h-1zM289 614h1v1h-1zM385 668h1v1h-1zM199 622h1v1h-1zM257 619h1v1h-1zM406 633h1v1h-1zM274 643h1v1h-1zM79 683h1v1h-1zM435 605h1v1h-1zM55 688h1v1h-1zM480 670h1v1h-1zM485 658h1v1h-1zM471 594h1v1h-1zM588 590h1v1h-1zM77 687h1v1h-1zM513 675h1v1h-1zM232 622h1v1h-1zM275 651h1v1h-1zM709 641h1v1h-1zM78 673h1v1h-1zM365 617h1v1h-1zM341 651h1v1h-1zM200 568h1v1h-1zM54 582h1v1h-1zM732 681h1v1h-1zM141 661h1v1h-1zM221 590h1v1h-1zM86 660h1v1h-1zM110 660h1v1h-1zM230 661h1v1h-1zM59 652h1v1h-1zM627 607h1v1h-1zM565 680h1v1h-1zM393 614h1v1h-1zM456 656h1v1h-1zM153 614h1v1h-1zM345 670h1v1h-1zM450 574h1v1h-1zM268 684h1v1h-1zM316 646h1v1h-1zM250 600h1v1h-1zM348 674h1v1h-1zM676 676h1v1h-1zM454 679h1v1h-1zM110 672h1v1h-1zM192 689h1v1h-1zM215 656h1v1h-1zM379 599h1v1h-1zM375 673h1v1h-1zM595 643h1v1h-1zM418 644h1v1h-1zM184 590h1v1h-1zM448 634h1v1h-1zM156 698h1v1h-1zM314 650h1v1h-1zM606 645h1v1h-1zM294 568h1v1h-1zM74 681h1v1h-1zM393 600h1v1h-1zM230 592h1v1h-1zM178 572h1v1h-1zM692 645h1v1h-1zM331 693h1v1h-1zM232 651h1v1h-1zM328 587h1v1h-1zM207 600h1v1h-1zM299 686h1v1h-1zM641 670h1v1h-1zM745 585h1v1h-1zM528 644h1v1h-1zM585 609h1v1h-1zM232 630h1v1h-1zM169 585h1v1h-1zM528 661h1v1h-1zM188 689h1v1h-1zM206 681h1v1h-1zM366 689h1v1h-1zM369 675h1v1h-1zM387 584h1v1h-1zM207 660h1v1h-1zM441 681h1v1h-1zM238 586h1v1h-1zM242 610h1v1h-1zM169 608h1v1h-1zM687 696h1v1h-1zM91 654h1v1h-1zM199 604h1v1h-1zM232 614h1v1h-1zM703 604h1v1h-1zM682 662h1v1h-1zM257 568h1v1h-1zM149 676h1v1h-1zM422 623h1v1h-1zM453 589h1v1h-1zM189 577h1v1h-1zM480 602h1v1h-1zM196 660h1v1h-1zM193 663h1v1h-1zM338 573h1v1h-1zM398 687h1v1h-1zM238 676h1v1h-1zM309 615h1v1h-1zM470 635h1v1h-1zM365 582h1v1h-1zM580 682h1v1h-1zM412 637h1v1h-1zM65 595h1v1h-1zM179 599h1v1h-1zM627 578h1v1h-1zM543 568h1v1h-1zM473 635h1v1h-1zM546 681h1v1h-1zM556 582h1v1h-1zM398 603h1v1h-1zM137 584h1v1h-1zM154 665h1v1h-1zM166 690h1v1h-1zM325 677h1v1h-1zM421 691h1v1h-1zM220 623h1v1h-1zM648 634h1v1h-1zM226 650h1v1h-1zM307 575h1v1h-1zM356 568h1v1h-1zM149 669h1v1h-1zM674 651h1v1h-1zM238 602h1v1h-1zM488 635h1v1h-1zM253 652h1v1h-1zM135 693h1v1h-1zM413 628h1v1h-1zM427 582h1v1h-1zM143 620h1v1h-1zM254 577h1v1h-1zM481 652h1v1h-1zM192 627h1v1h-1zM437 628h1v1h-1zM269 595h1v1h-1zM412 643h1v1h-1zM59 680h1v1h-1zM219 631h1v1h-1zM251 605h1v1h-1zM595 574h1v1h-1zM94 624h1v1h-1zM569 595h1v1h-1zM159 612h1v1h-1zM416 664h1v1h-1zM695 681h1v1h-1zM54 643h1v1h-1zM454 670h1v1h-1zM318 626h1v1h-1zM326 617h1v1h-1zM278 678h1v1h-1zM403 590h1v1h-1zM265 642h1v1h-1zM461 688h1v1h-1zM279 677h1v1h-1zM58 641h1v1h-1zM415 617h1v1h-1zM303 612h1v1h-1zM421 615h1v1h-1zM333 642h1v1h-1zM394 649h1v1h-1zM171 696h1v1h-1zM128 657h1v1h-1zM161 634h1v1h-1zM406 590h1v1h-1zM495 612h1v1h-1zM80 670h1v1h-1zM267 566h1v1h-1zM265 643h1v1h-1zM522 632h1v1h-1zM441 652h1v1h-1zM455 582h1v1h-1zM161 580h1v1h-1zM121 635h1v1h-1zM619 567h1v1h-1zM170 579h1v1h-1zM296 617h1v1h-1zM89 643h1v1h-1zM488 571h1v1h-1zM272 674h1v1h-1zM265 693h1v1h-1zM222 661h1v1h-1zM207 682h1v1h-1zM392 598h1v1h-1zM173 590h1v1h-1zM446 636h1v1h-1zM322 574h1v1h-1zM137 612h1v1h-1zM223 603h1v1h-1zM218 654h1v1h-1zM291 659h1v1h-1zM116 677h1v1h-1zM141 677h1v1h-1zM618 612h1v1h-1zM211 583h1v1h-1zM549 685h1v1h-1zM465 598h1v1h-1zM479 682h1v1h-1zM137 638h1v1h-1zM241 617h1v1h-1zM270 577h1v1h-1zM175 608h1v1h-1zM518 640h1v1h-1zM305 605h1v1h-1zM97 596h1v1h-1zM139 603h1v1h-1zM335 669h1v1h-1zM144 569h1v1h-1zM298 653h1v1h-1zM543 678h1v1h-1zM299 590h1v1h-1zM132 663h1v1h-1zM553 571h1v1h-1zM165 606h1v1h-1zM319 607h1v1h-1zM501 677h1v1h-1zM452 599h1v1h-1zM357 612h1v1h-1zM51 669h1v1h-1zM252 679h1v1h-1zM479 598h1v1h-1zM129 593h1v1h-1zM111 618h1v1h-1zM249 691h1v1h-1zM370 658h1v1h-1zM352 689h1v1h-1zM140 571h1v1h-1zM235 694h1v1h-1zM500 599h1v1h-1zM92 620h1v1h-1zM192 584h1v1h-1zM218 634h1v1h-1zM298 683h1v1h-1zM151 610h1v1h-1zM587 654h1v1h-1zM473 667h1v1h-1zM636 604h1v1h-1zM305 574h1v1h-1zM249 659h1v1h-1zM366 609h1v1h-1zM381 588h1v1h-1zM101 697h1v1h-1zM580 661h1v1h-1zM127 623h1v1h-1zM184 567h1v1h-1zM511 598h1v1h-1zM148 669h1v1h-1zM181 678h1v1h-1zM181 608h1v1h-1zM310 615h1v1h-1zM637 571h1v1h-1zM450 675h1v1h-1zM403 605h1v1h-1zM460 657h1v1h-1zM166 694h1v1h-1zM114 624h1v1h-1zM185 566h1v1h-1zM250 634h1v1h-1zM347 624h1v1h-1zM259 640h1v1h-1zM296 577h1v1h-1zM279 695h1v1h-1zM93 647h1v1h-1zM260 692h1v1h-1zM389 605h1v1h-1zM293 569h1v1h-1zM184 625h1v1h-1zM111 615h1v1h-1zM460 636h1v1h-1zM449 581h1v1h-1zM178 638h1v1h-1zM130 599h1v1h-1zM117 599h1v1h-1zM395 596h1v1h-1zM454 634h1v1h-1zM465 620h1v1h-1zM102 680h1v1h-1zM439 666h1v1h-1zM131 661h1v1h-1zM122 618h1v1h-1zM171 640h1v1h-1zM597 669h1v1h-1zM91 615h1v1h-1zM61 594h1v1h-1zM262 622h1v1h-1zM169 611h1v1h-1zM633 615h1v1h-1zM559 646h1v1h-1zM121 672h1v1h-1zM130 655h1v1h-1zM230 625h1v1h-1zM131 580h1v1h-1zM615 639h1v1h-1zM255 616h1v1h-1zM152 637h1v1h-1zM719 611h1v1h-1zM157 682h1v1h-1zM615 590h1v1h-1zM327 587h1v1h-1zM104 594h1v1h-1zM81 614h1v1h-1zM380 617h1v1h-1zM300 643h1v1h-1zM286 627h1v1h-1zM746 585h1v1h-1zM524 602h1v1h-1zM403 641h1v1h-1zM750 640h1v1h-1zM498 603h1v1h-1zM265 664h1v1h-1zM409 612h1v1h-1zM439 574h1v1h-1zM288 697h1v1h-1zM390 598h1v1h-1zM216 584h1v1h-1zM56 626h1v1h-1zM365 606h1v1h-1zM170 606h1v1h-1zM268 639h1v1h-1zM107 643h1v1h-1zM663 630h1v1h-1zM232 587h1v1h-1zM239 595h1v1h-1zM332 646h1v1h-1zM189 694h1v1h-1zM474 673h1v1h-1zM147 637h1v1h-1zM281 652h1v1h-1zM336 610h1v1h-1zM91 572h1v1h-1zM492 631h1v1h-1zM472 627h1v1h-1zM60 641h1v1h-1zM747 647h1v1h-1zM116 584h1v1h-1zM591 674h1v1h-1zM349 644h1v1h-1zM442 646h1v1h-1zM284 600h1v1h-1zM370 635h1v1h-1zM57 653h1v1h-1zM584 569h1v1h-1zM145 632h1v1h-1zM442 690h1v1h-1zM308 589h1v1h-1zM165 669h1v1h-1zM222 632h1v1h-1zM499 672h1v1h-1zM375 686h1v1h-1zM127 574h1v1h-1zM506 680h1v1h-1zM93 620h1v1h-1zM493 599h1v1h-1zM235 596h1v1h-1zM194 651h1v1h-1zM261 594h1v1h-1zM452 680h1v1h-1zM250 630h1v1h-1zM370 683h1v1h-1zM198 613h1v1h-1zM179 698h1v1h-1zM260 580h1v1h-1zM737 687h1v1h-1zM157 578h1v1h-1zM169 578h1v1h-1zM290 661h1v1h-1zM74 671h1v1h-1zM537 633h1v1h-1zM214 579h1v1h-1zM65 608h1v1h-1zM670 630h1v1h-1zM146 589h1v1h-1zM534 664h1v1h-1zM404 613h1v1h-1zM297 694h1v1h-1zM243 601h1v1h-1zM99 633h1v1h-1zM338 614h1v1h-1zM58 652h1v1h-1zM434 657h1v1h-1zM275 695h1v1h-1zM323 620h1v1h-1zM151 566h1v1h-1zM230 616h1v1h-1zM220 581h1v1h-1zM691 658h1v1h-1zM279 639h1v1h-1zM273 566h1v1h-1zM410 698h1v1h-1zM216 664h1v1h-1zM318 618h1v1h-1zM422 656h1v1h-1zM278 638h1v1h-1zM208 601h1v1h-1zM387 584h1v1h-1zM420 674h1v1h-1zM219 675h1v1h-1zM375 676h1v1h-1zM81 676h1v1h-1zM627 586h1v1h-1zM228 613h1v1h-1zM370 618h1v1h-1zM367 672h1v1h-1zM585 656h1v1h-1zM309 597h1v1h-1zM312 616h1v1h-1zM63 641h1v1h-1zM91 661h1v1h-1zM244 598h1v1h-1zM639 650h1v1h-1zM349 648h1v1h-1zM312 624h1v1h-1zM309 605h1v1h-1zM338 673h1v1h-1zM299 642h1v1h-1zM313 609h1v1h-1zM100 616h1v1h-1zM421 685h1v1h-1zM584 644h1v1h-1zM377 677h1v1h-1zM343 684h1v1h-1zM361 634h1v1h-1zM79 639h1v1h-1zM134 576h1v1h-1zM627 577h1v1h-1zM89 660h1v1h-1zM391 657h1v1h-1zM345 698h1v1h-1zM153 634h1v1h-1zM55 602h1v1h-1zM235 599h1v1h-1zM411 572h1v1h-1zM265 672h1v1h-1zM193 637h1v1h-1zM314 631h1v1h-1zM462 672h1v1h-1zM192 639h1v1h-1zM87 636h1v1h-1zM339 609h1v1h-1zM243 604h1v1h-1zM468 690h1v1h-1zM364 573h1v1h-1zM356 572h1v1h-1zM659 645h1v1h-1zM178 640h1v1h-1zM258 677h1v1h-1zM153 593h1v1h-1zM122 670h1v1h-1zM515 686h1v1h-1zM534 573h1v1h-1zM541 677h1v1h-1zM258 643h1v1h-1zM275 586h1v1h-1zM644 672h1v1h-1zM74 651h1v1h-1zM208 578h1v1h-1zM378 623h1v1h-1zM529 676h1v1h-1zM137 698h1v1h-1zM255 665h1v1h-1zM116 680h1v1h-1zM472 577h1v1h-1zM149 684h1v1h-1zM647 688h1v1h-1zM73 694h1v1h-1zM293 653h1v1h-1zM86 625h1v1h-1zM225 589h1v1h-1zM99 578h1v1h-1zM470 570h1v1h-1zM412 652h1v1h-1zM144 612h1v1h-1zM315 587h1v1h-1zM170 610h1v1h-1zM389 578h1v1h-1zM670 631h1v1h-1zM428 628h1v1h-1zM166 633h1v1h-1zM309 619h1v1h-1zM194 597h1v1h-1zM678 691h1v1h-1zM395 641h1v1h-1zM536 665h1v1h-1zM159 570h1v1h-1zM328 604h1v1h-1zM678 642h1v1h-1zM215 670h1v1h-1zM552 598h1v1h-1zM80 658h1v1h-1zM700 691h1v1h-1zM341 577h1v1h-1zM223 656h1v1h-1zM157 584h1v1h-1zM190 610h1v1h-1zM401 686h1v1h-1zM191 678h1v1h-1zM605 661h1v1h-1zM297 694h1v1h-1zM146 690h1v1h-1zM467 675h1v1h-1zM261 636h1v1h-1zM717 694h1v1h-1zM606 677h1v1h-1zM214 626h1v1h-1zM217 686h1v1h-1zM327 671h1v1h-1zM112 677h1v1h-1zM290 677h1v1h-1zM610 631h1v1h-1zM62 674h1v1h-1zM346 626h1v1h-1zM287 613h1v1h-1zM256 602h1v1h-1zM136 571h1v1h-1zM631 602h1v1h-1zM209 647h1v1h-1zM184 587h1v1h-1zM422 589h1v1h-1zM621 612h1v1h-1zM122 680h1v1h-1zM413 689h1v1h-1zM104 625h1v1h-1zM315 655h1v1h-1zM307 573h1v1h-1zM443 665h1v1h-1zM579 609h1v1h-1zM147 684h1v1h-1zM152 642h1v1h-1zM83 665h1v1h-1zM503 667h1v1h-1zM256 621h1v1h-1zM319 660h1v1h-1zM538 587h1v1h-1zM149 682h1v1h-1zM165 588h1v1h-1zM270 605h1v1h-1zM269 592h1v1h-1zM277 580h1v1h-1zM234 617h1v1h-1zM194 625h1v1h-1zM158 628h1v1h-1zM444 666h1v1h-1zM245 688h1v1h-1zM424 649h1v1h-1zM234 571h1v1h-1zM300 601h1v1h-1zM222 638h1v1h-1zM341 580h1v1h-1zM267 694h1v1h-1zM291 673h1v1h-1zM297 681h1v1h-1zM425 655h1v1h-1zM289 620h1v1h-1zM335 602h1v1h-1zM642 655h1v1h-1zM143 659h1v1h-1zM482 574h1v1h-1zM243 595h1v1h-1zM117 695h1v1h-1zM544 677h1v1h-1zM280 649h1v1h-1zM148 573h1v1h-1zM365 673h1v1h-1zM78 580h1v1h-1zM209 611h1v1h-1zM284 594h1v1h-1zM610 677h1v1h-1zM72 569h1v1h-1zM406 574h1v1h-1zM463 634h1v1h-1zM466 681h1v1h-1zM746 629h1v1h-1zM145 656h1v1h-1zM291 619h1v1h-1zM250 663h1v1h-1zM414 592h1v1h-1zM547 601h1v1h-1zM445 695h1v1h-1zM558 487h1v1h-1zM495 499h1v1h-1zM266 514h1v1h-1zM371 498h1v1h-1zM630 531h1v1h-1zM409 487h1v1h-1z" fill="#ecec66"/><path d="M50.5,243.9 L52.9,241.7 L57.5,259.9 L60.8,229.0 L64.0,236.3 L67.9,248.2 L71.6,236.8 L76.1,249.8 L80.8,235.7 L85.4,249.8 L89.2,236.6 L94.7,249.6 L98.8,237.0 L104.6,248.4 L109.1,237.8 L112.8,247.6 L117.0,235.9 L120.9,249.1 L126.4,236.0 L131.3,248.2 L135.8,236.8 L139.5,249.8 L143.5,237.1 L148.1,249.1 L153.1,236.6 L157.3,247.8 L162.5,236.2 L167.5,248.5 L173.1,237.2 L177.4,247.2 L181.2,236.5 L186.6,249.5 L191.3,235.7 L196.4,247.8 L201.4,237.5 L205.7,248.0 L210.7,236.9 L215.3,247.6 L221.1,236.7 L226.3,249.8 L231.5,237.0 L236.0,237.3 L239.5,237.3 L241.0,278.0 L245.0,221.3 L248.0,227.4 L250.0,225.7 L252.2,226.3 L257.1,236.4 L264.1,225.4 L266.3,225.3 L269.2,235.5 L274.2,225.3 L276.4,225.6 L279.4,234.0 L284.5,225.3 L286.7,225.9 L290.5,233.5 L296.5,226.3 L298.7,226.6 L302.8,233.4 L309.2,225.6 L311.4,226.6 L314.9,235.8 L320.6,225.4 L322.8,225.5 L328.0,237.1 L334.0,225.2 L337.0,250.5 L340.0,225.7 L342.0,226.0 L344.2,225.6 L347.6,235.4 L353.2,225.7 L355.4,226.1 L358.2,235.7 L363.2,225.9 L365.4,226.2 L370.6,234.4 L378.0,226.4 L380.2,226.4 L384.6,237.6 L391.3,225.7 L393.5,225.8 L398.5,233.9 L405.7,225.2 L407.9,225.3 L411.0,234.7 L416.2,225.6 L418.4,225.2 L421.7,237.0 L427.0,225.7 L431.0,257.7 L433.4,274.2 L437.0,236.7 L440.0,235.6 L443.9,249.1 L448.3,235.7 L454.0,247.7 L457.9,236.2 L462.3,248.4 L466.1,237.5 L472.1,248.1 L476.8,235.8 L480.6,248.5 L484.7,237.4 L488.7,249.3 L494.5,236.8 L498.4,247.9 L502.0,236.8 L507.9,247.0 L513.2,236.2 L517.6,248.9 L523.0,236.8 L528.4,248.5 L532.5,237.4 L538.4,247.0 L543.9,237.4 L549.2,248.8 L554.0,236.4 L557.6,249.3 L561.8,236.2 L567.1,246.8 L571.7,237.7 L577.6,246.8 L582.0,236.1 L586.1,248.9 L590.2,237.0 L595.9,247.1 L600.6,237.1 L606.0,249.2 L611.2,237.6 L616.6,247.3 L621.3,236.0 L626.7,248.5 L632.2,237.8 L636.7,248.3 L642.5,237.2 L647.0,238.4 L649.5,253.3 L651.5,225.2 L654.0,226.4 L656.2,226.5 L659.6,236.0 L665.1,226.5 L667.3,226.2 L670.8,232.6 L676.4,225.3 L678.6,225.2 L682.5,234.0 L688.6,225.9 L690.8,226.7 L696.3,233.5 L704.0,226.3 L706.2,225.5 L710.3,232.4 L716.6,225.5 L718.8,226.1 L722.5,235.3 L728.4,225.3 L730.6,226.7 L734.3,234.6 L740.2,226.0 L742.4,226.6 L746.3,234.4 L752.5,225.8 L754.7,226.0 L758.8,232.2" fill="none" stroke="#66b6e6" stroke-width="1" stroke-linejoin="miter"/></svg>
<div class="yl" style="left:14.5px;top:164.0px">100</div>
<div class="yl" style="left:14.5px;top:219.1px">90</div>
<div class="yl" style="left:14.5px;top:274.2px">80</div>
<div class="yl" style="left:14.5px;top:329.3px">70</div>
<div class="yl" style="left:14.5px;top:384.4px">60</div>
<div class="yl" style="left:14.5px;top:439.5px">50</div>
<div class="yl" style="left:14.5px;top:494.6px">40</div>
<div class="yl" style="left:14.5px;top:549.7px">30</div>
<div class="yl" style="left:14.5px;top:604.8px">20</div>
<div class="yl" style="left:14.5px;top:659.9px">10</div>
<div class="t" style="left:761px;top:164.0px;font-size:11px">50</div>
<div class="t" style="left:761px;top:219.1px;font-size:11px">45</div>
<div class="t" style="left:761px;top:274.2px;font-size:11px">40</div>
<div class="t" style="left:761px;top:329.3px;font-size:11px">35</div>
<div class="t" style="left:761px;top:384.4px;font-size:11px">30</div>
<div class="t" style="left:761px;top:439.5px;font-size:11px">25</div>
<div class="t" style="left:761px;top:494.6px;font-size:11px">20</div>
<div class="t" style="left:761px;top:549.7px;font-size:11px">15</div>
<div class="t" style="left:761px;top:604.8px;font-size:11px">10</div>
<div class="t" style="left:761px;top:659.9px;font-size:11px">5</div>
<div class="t" style="left:50px;top:157px;font-size:11px;letter-spacing:-0.4px">MB/s</div>
<div class="t" style="left:742px;top:157px;font-size:11px">ms</div>
<div class="t" style="left:35.0px;top:727px;font-size:11px;width:30px;text-align:center">0</div>
<div class="t" style="left:105.0px;top:727px;font-size:11px;width:30px;text-align:center">100</div>
<div class="t" style="left:175.0px;top:727px;font-size:11px;width:30px;text-align:center">200</div>
<div class="t" style="left:246.0px;top:727px;font-size:11px;width:30px;text-align:center">300</div>
<div class="t" style="left:316.0px;top:727px;font-size:11px;width:30px;text-align:center">400</div>
<div class="t" style="left:387.0px;top:727px;font-size:11px;width:30px;text-align:center">500</div>
<div class="t" style="left:458.0px;top:727px;font-size:11px;width:30px;text-align:center">600</div>
<div class="t" style="left:528.0px;top:727px;font-size:11px;width:30px;text-align:center">700</div>
<div class="t" style="left:599.0px;top:727px;font-size:11px;width:30px;text-align:center">800</div>
<div class="t" style="left:669.0px;top:727px;font-size:11px;width:30px;text-align:center">900</div>
<div class="t" style="left:737px;top:727px;font-size:11px;letter-spacing:-0.45px">1000mB</div>
<div class="btn" style="left:793px;top:151px;width:73px;height:20px"></div>
<div class="t" style="left:817.5px;top:155px;font-size:11px;letter-spacing:-0.3px">Start</div>
<div class="a" style="left:784px;top:181px;width:102px;height:1px;background:#a0a0a0"></div>
<div class="a" style="left:784px;top:220px;width:102px;height:1px;background:#a0a0a0"></div>
<div class="a" style="left:784px;top:293px;width:102px;height:1px;background:#a0a0a0"></div>
<div class="a" style="left:784px;top:396px;width:102px;height:1px;background:#a0a0a0"></div>
<div class="a" style="left:789px;letter-spacing:-0.3px;top:188px;width:12px;height:12px;border-radius:50%;border:1px solid #8a8a8a;background:radial-gradient(circle,#1a4a70 0,#2a7ab0 2.5px,#c8dce8 3.5px,#f4f4f4 6px)"></div>
<div class="a" style="left:789px;letter-spacing:-0.3px;top:204px;width:12px;height:12px;border-radius:50%;border:1px solid #8a8a8a;background:radial-gradient(circle,#e8e8e8,#f8f8f8)"></div>
<div class="t" style="left:805.5px;letter-spacing:-0.3px;top:189px;font-size:11px">Read</div>
<div class="t" style="left:805.5px;letter-spacing:-0.3px;top:205px;font-size:11px">Write</div>
<div class="cb" style="left:789px;top:229px"></div><svg style="position:absolute;left:791px;top:231px" width="9" height="9" viewBox="0 0 9 9" ><path d="M1 4.5L3.5 8L8 0.5" stroke="#3a4a80" stroke-width="1.8" fill="none"/></svg>
<div class="t" style="left:805.5px;letter-spacing:-0.3px;top:230px;font-size:11px">Short stroke</div>
<div class="a" style="left:789px;letter-spacing:-0.3px;top:248px;width:62px;height:20px;border:1px solid #b8b8b8;border-top-color:#a0a0a0;background:#fff"></div>
<div class="t" style="left:793px;top:253px;font-size:11px">1</div>
<div class="a" style="left:834px;top:249px;width:16px;height:9px;border:1px solid #c8c8c8;background:linear-gradient(#f4f4f4,#e4e4e4)"></div>
<div class="a" style="left:834px;top:258px;width:16px;height:9px;border:1px solid #c8c8c8;background:linear-gradient(#f4f4f4,#e4e4e4)"></div>
<svg style="position:absolute;left:838px;top:251px" width="7" height="4" viewBox="0 0 7 4" ><path d="M0 4H7L3.5 0Z" fill="#606880"/></svg>
<svg style="position:absolute;left:838px;top:261px" width="7" height="4" viewBox="0 0 7 4" ><path d="M0 0H7L3.5 4Z" fill="#606880"/></svg>
<div class="t" style="left:861px;top:253px;font-size:11px">gB</div>
<div class="cb" style="left:789px;top:278px"></div><svg style="position:absolute;left:791px;top:280px" width="9" height="9" viewBox="0 0 9 9" ><path d="M1 4.5L3.5 8L8 0.5" stroke="#3a4a80" stroke-width="1.8" fill="none"/></svg>
<div class="t" style="left:805.5px;letter-spacing:-0.3px;top:278.5px;font-size:11px">Transfer rate</div>
<div class="t" style="left:789px;letter-spacing:-0.3px;top:296px;font-size:11px">Minimum</div>
<div class="box" style="left:790px;top:311px;width:91px;height:14px;color:#3aa0e0">80.3 MB/s</div>
<div class="t" style="left:789px;letter-spacing:-0.3px;top:329px;font-size:11px">Maximum</div>
<div class="box" style="left:790px;top:343px;width:91px;height:14px;color:#3aa0e0">90.6 MB/s</div>
<div class="t" style="left:789px;letter-spacing:-0.3px;top:359px;font-size:11px">Average</div>
<div class="box" style="left:790px;top:374px;width:91px;height:14px;color:#3aa0e0">87.7 MB/s</div>
<div class="cb" style="left:789px;top:402px"></div><svg style="position:absolute;left:791px;top:404px" width="9" height="9" viewBox="0 0 9 9" ><path d="M1 4.5L3.5 8L8 0.5" stroke="#3a4a80" stroke-width="1.8" fill="none"/></svg>
<div class="t" style="left:805.5px;letter-spacing:-0.3px;top:403px;font-size:11px">Access time</div>
<div class="box" style="left:790px;top:418px;width:91px;height:14px;color:#f0f060">8.48 ms</div>
<div class="cb" style="left:789px;top:436px"></div><svg style="position:absolute;left:791px;top:438px" width="9" height="9" viewBox="0 0 9 9" ><path d="M1 4.5L3.5 8L8 0.5" stroke="#3a4a80" stroke-width="1.8" fill="none"/></svg>
<div class="t" style="left:805.5px;letter-spacing:-0.3px;top:437px;font-size:11px">Burst rate</div>
<div class="box" style="left:790px;top:452px;width:91px;height:14px;color:#fff">121.1 MB/s</div>
<div class="t" style="left:789px;letter-spacing:-0.3px;top:470px;font-size:11px">CPU usage</div>
<div class="box" style="left:790px;top:485px;width:91px;height:14px;color:#fff">3.9%</div>
<svg class="a" style="left:0;top:0" width="914" height="774" viewBox="0 0 914 774"><path fill-rule="evenodd" d="M623.8 679.5 L666 721.7 L623.8 763.5 L581.5 721.7 Z M624 704 L641.7 721.7 L624 739.6 L606 721.7 Z" fill="rgba(228,126,0,.55)" stroke="rgba(228,126,0,.55)" stroke-width="0"/><path d="M630.2 743.2 l5 5 M635.7 737.7 l5 5 M641.2 732.2 l5 5 M646.7 726.7 l5 5" stroke="rgba(255,255,255,.8)" stroke-width="2.4" stroke-linecap="round"/><path d="M624 704.5 L641.2 721.7 L624 739.2 L606.5 721.7 Z" fill="rgba(255,255,255,.6)" stroke="rgba(0,0,0,.6)" stroke-width="3.2" stroke-linejoin="round"/><path d="M687.5 692.5 H700 Q705 692.5 705 697.5 V702.5 Q705 707.5 700 707.5 H687.5 Q682.5 707.5 682.5 702.5 V697.5 Q682.5 692.5 687.5 692.5 Z M708 692.5 L719 707.5 L730 692.5 M755 692.5 H739 Q734 692.5 734 697.5 V702.5 Q734 707.5 739 707.5 H755 M734 700 H754 M760 708.0 V692.5 H775.5 Q780 692.5 780 697 Q780 701 775.5 701 H760 M771 701 L781 708.0 M804 692.5 H789.5 Q784.5 692.5 784.5 697.5 V702.5 Q784.5 707.5 789.5 707.5 H804 M809 692.0 V707.5 H829 M839 692.5 H850.5 Q855.5 692.5 855.5 697.5 V702.5 Q855.5 707.5 850.5 707.5 H839 Q834 707.5 834 702.5 V697.5 Q834 692.5 839 692.5 Z M880.5 692.5 H865 Q860 692.5 860 697.5 V702.5 Q860 707.5 865 707.5 H880.5 M886 692.0 V708.0 M903 692.0 L887 700 L903 708.0" fill="none" stroke="rgba(26,26,26,.52)" stroke-width="2.6" stroke-linejoin="round"/><path d="M699 716.5 H728 L689 749 H730 M753 716.5 H776 Q785 716.5 785 725.5 V740 Q785 749 776 749 H753 Q744 749 744 740 V725.5 Q744 716.5 753 716.5 Z M798 751 V716.5 L839.5 749 V714.5 M898 716.5 H866.5 Q857.5 716.5 857.5 725.5 V740 Q857.5 749 866.5 749 H898 M857.5 732.5 H897" fill="none" stroke="rgba(26,26,26,.52)" stroke-width="6.5" stroke-linejoin="miter"/></svg>
</body></html>
